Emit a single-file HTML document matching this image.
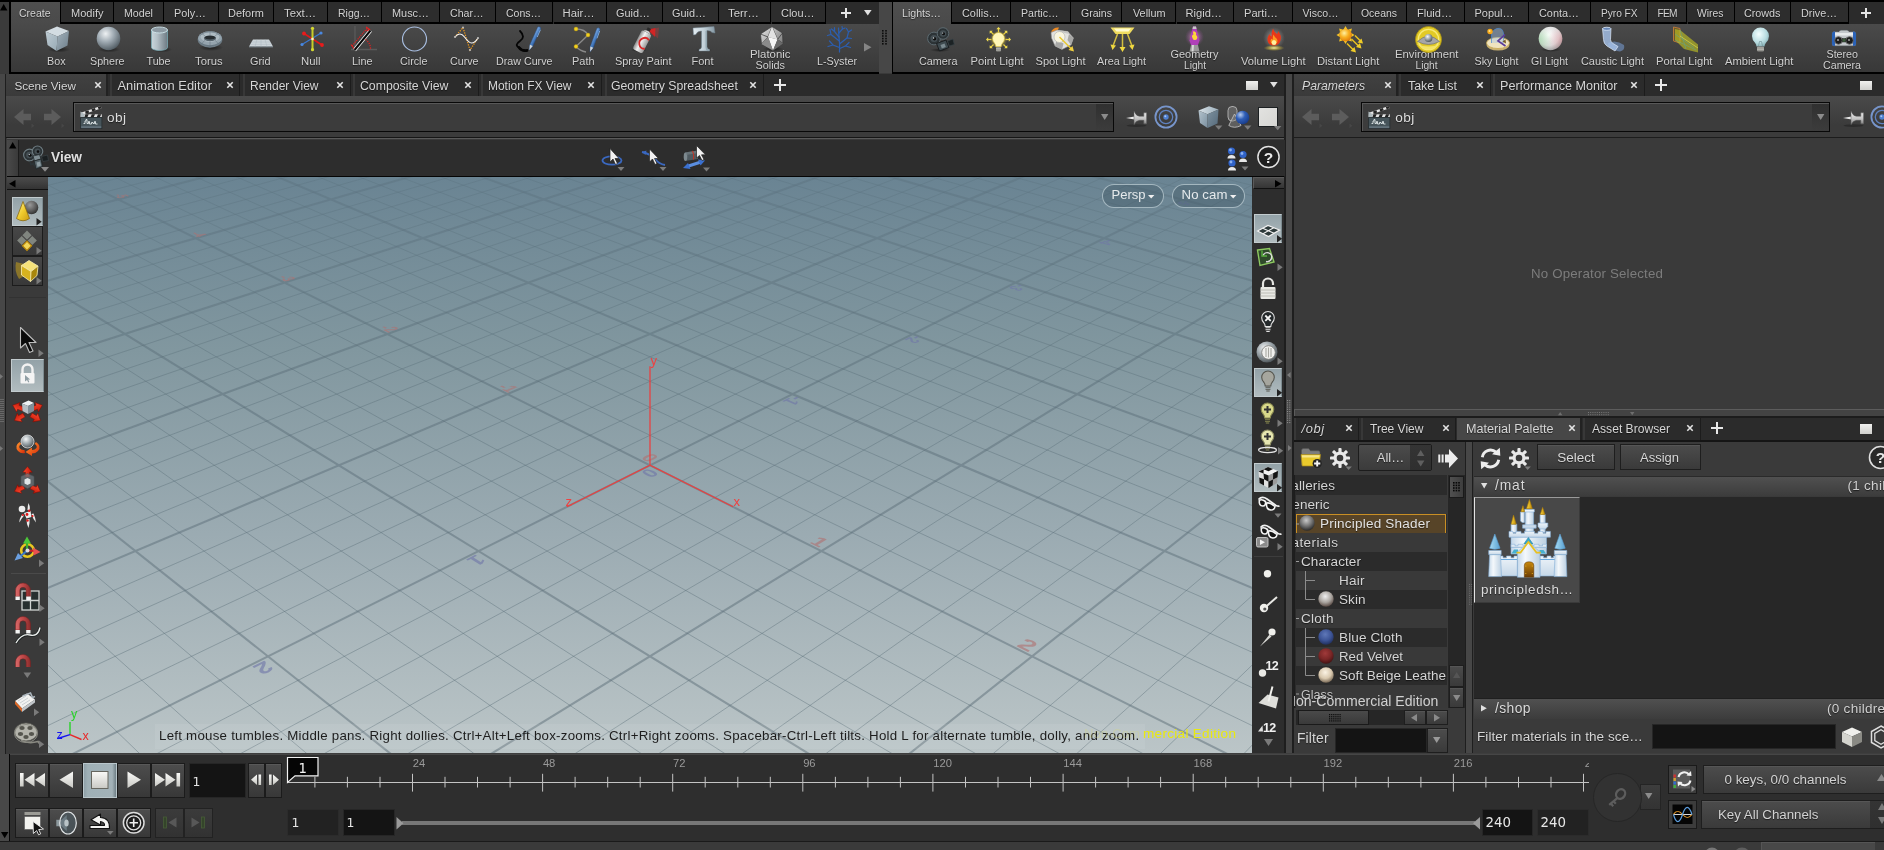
<!DOCTYPE html>
<html lang="en"><head><meta charset="utf-8"><title>Houdini - untitled.hip</title>
<style>
html,body{margin:0;padding:0;background:#3a3a3a;}
body{width:1884px;height:850px;overflow:hidden;font-family:"Liberation Sans",sans-serif;font-size:10.5px;color:#cbcbcb;}
#app{will-change:transform;position:relative;width:1884px;height:850px;overflow:hidden;background:#3a3a3a;}
#app div,#app svg{position:absolute;box-sizing:border-box;}
#app svg{overflow:visible;}
.t{white-space:nowrap;text-shadow:0 1px 1px rgba(0,0,0,.55);}
.ns{text-shadow:none;}
.tab{background:#2d2d2d;border-right:1px solid #000;border-bottom:2px solid #000;}
.btn{background:linear-gradient(#4c4c4c,#3a3a3a);border:1px solid #1e1e1e;box-shadow:inset 0 1px 0 rgba(255,255,255,.06);}
.sel{background:linear-gradient(#8e9da3,#a9b5b8);border:1px solid #c4cccf;}
.field{background:#141414;border:1px solid #262626;}

</style></head>
<body>
<svg width="0" height="0" style="position:absolute"><defs></defs></svg>

<div id="app">
<div style="left:0px;top:0px;width:1884px;height:2px;background:#000;"></div>
<div style="left:0px;top:2px;width:9px;height:71px;background:#3b3b3b;"></div>
<svg style="left:0px;top:4px;" width="8" height="7" viewBox="0 0 8 7"><path d="M0 6.5 L3.7 0 L7.4 6.5Z" fill="#000"/></svg>
<div style="left:9px;top:2px;width:2px;height:72px;background:#000;"></div>
<div style="left:11px;top:2px;width:868px;height:70px;background:linear-gradient(#4a4a4a 0,#4a4a4a 22px,#383838 100%);"></div>
<div style="left:61px;top:2px;width:818px;height:22px;background:#2b2b2b;"></div>
<div style="left:11px;top:2px;width:50px;height:22px;background:linear-gradient(#4f4f4f,#4a4a4a);border-right:1px solid #000;"></div>
<div class="t" style="left:19px;top:8.00px;font-size:10.49px;line-height:11px;letter-spacing:0.000px;color:#d2d2d2;">Create</div>
<div class="tab" style="left:61px;top:2px;width:53px;height:22px;"></div>
<div class="t" style="left:71px;top:7.00px;font-size:11.03px;line-height:12px;letter-spacing:0.000px;color:#d2d2d2;">Modify</div>
<div class="tab" style="left:114px;top:2px;width:50.4px;height:22px;"></div>
<div class="t" style="left:124px;top:7.00px;font-size:10.65px;line-height:12px;letter-spacing:0.000px;color:#d2d2d2;">Model</div>
<div class="tab" style="left:164.4px;top:2px;width:54.2px;height:22px;"></div>
<div class="t" style="left:174px;top:7.00px;font-size:10.86px;line-height:12px;letter-spacing:0.000px;color:#d2d2d2;">Poly…</div>
<div class="tab" style="left:218.6px;top:2px;width:55.2px;height:22px;"></div>
<div class="t" style="left:228px;top:7.00px;font-size:10.98px;line-height:12px;letter-spacing:0.000px;color:#d2d2d2;">Deform</div>
<div class="tab" style="left:273.8px;top:2px;width:53.8px;height:22px;"></div>
<div class="t" style="left:284px;top:7.00px;font-size:11.29px;line-height:12px;letter-spacing:0.000px;color:#d2d2d2;">Text…</div>
<div class="tab" style="left:327.6px;top:2px;width:54.7px;height:22px;"></div>
<div class="t" style="left:338px;top:8.00px;font-size:10.47px;line-height:11px;letter-spacing:0.000px;color:#d2d2d2;">Rigg…</div>
<div class="tab" style="left:382.3px;top:2px;width:58px;height:22px;"></div>
<div class="t" style="left:392px;top:7.00px;font-size:10.92px;line-height:12px;letter-spacing:0.000px;color:#d2d2d2;">Musc…</div>
<div class="tab" style="left:440.3px;top:2px;width:56px;height:22px;"></div>
<div class="t" style="left:450px;top:7.00px;font-size:10.58px;line-height:12px;letter-spacing:0.000px;color:#d2d2d2;">Char…</div>
<div class="tab" style="left:496.3px;top:2px;width:57.2px;height:22px;"></div>
<div class="t" style="left:506px;top:8.00px;font-size:10.50px;line-height:11px;letter-spacing:0.000px;color:#d2d2d2;">Cons…</div>
<div class="tab" style="left:553.5px;top:2px;width:53px;height:22px;"></div>
<div class="t" style="left:562.5px;top:7.00px;font-size:11.29px;line-height:12px;letter-spacing:0.000px;color:#d2d2d2;">Hair…</div>
<div class="tab" style="left:606.5px;top:2px;width:56px;height:22px;"></div>
<div class="t" style="left:616px;top:7.00px;font-size:10.92px;line-height:12px;letter-spacing:0.000px;color:#d2d2d2;">Guid…</div>
<div class="tab" style="left:662.5px;top:2px;width:56.1px;height:22px;"></div>
<div class="t" style="left:672px;top:7.00px;font-size:10.92px;line-height:12px;letter-spacing:0.000px;color:#d2d2d2;">Guid…</div>
<div class="tab" style="left:718.6px;top:2px;width:52.9px;height:22px;"></div>
<div class="t" style="left:728px;top:7.00px;font-size:11.39px;line-height:12px;letter-spacing:0.000px;color:#d2d2d2;">Terr…</div>
<div class="tab" style="left:771.5px;top:2px;width:54.9px;height:22px;"></div>
<div class="t" style="left:781px;top:7.00px;font-size:10.96px;line-height:12px;letter-spacing:0.000px;color:#d2d2d2;">Clou…</div>
<svg style="left:841px;top:8px;" width="10" height="10" viewBox="0 0 10 10"><path d="M5 0V10M0 5H10" stroke="#e6e6e6" stroke-width="2" fill="none"/></svg>
<svg style="left:864px;top:10px;" width="8" height="6" viewBox="0 0 8 6"><path d="M0 0H7.6L3.8 5.6Z" fill="#e0e0e0"/></svg>
<div style="left:11px;top:72px;width:868px;height:2px;background:#000;"></div>
<div class="t" style="left:47px;top:55.00px;font-size:10.74px;line-height:12px;letter-spacing:0.000px;color:#d0d0d0;">Box</div>
<div class="t" style="left:90px;top:55.00px;font-size:10.70px;line-height:12px;letter-spacing:0.000px;color:#d0d0d0;">Sphere</div>
<div class="t" style="left:146.5px;top:55.00px;font-size:10.70px;line-height:12px;letter-spacing:0.000px;color:#d0d0d0;">Tube</div>
<div class="t" style="left:195px;top:55.00px;font-size:11.25px;line-height:12px;letter-spacing:0.000px;color:#d0d0d0;">Torus</div>
<div class="t" style="left:250px;top:55.00px;font-size:10.85px;line-height:12px;letter-spacing:0.000px;color:#d0d0d0;">Grid</div>
<div class="t" style="left:301px;top:55.00px;font-size:11.32px;line-height:12px;letter-spacing:0.000px;color:#d0d0d0;">Null</div>
<div class="t" style="left:352px;top:55.00px;font-size:10.84px;line-height:12px;letter-spacing:0.000px;color:#d0d0d0;">Line</div>
<div class="t" style="left:400px;top:55.00px;font-size:10.76px;line-height:12px;letter-spacing:0.000px;color:#d0d0d0;">Circle</div>
<div class="t" style="left:450px;top:55.00px;font-size:10.68px;line-height:12px;letter-spacing:0.000px;color:#d0d0d0;">Curve</div>
<div class="t" style="left:496px;top:55.00px;font-size:10.70px;line-height:12px;letter-spacing:0.000px;color:#d0d0d0;">Draw Curve</div>
<div class="t" style="left:572px;top:55.00px;font-size:10.94px;line-height:12px;letter-spacing:0.000px;color:#d0d0d0;">Path</div>
<div class="t" style="left:615px;top:55.00px;font-size:10.93px;line-height:12px;letter-spacing:-0.000px;color:#d0d0d0;">Spray Paint</div>
<div class="t" style="left:691.5px;top:55.00px;font-size:10.99px;line-height:12px;letter-spacing:0.000px;color:#d0d0d0;">Font</div>
<div class="t" style="left:750px;top:47.70px;font-size:11.38px;line-height:12px;letter-spacing:0.000px;color:#d0d0d0;">Platonic</div>
<div class="t" style="left:755.5px;top:58.70px;font-size:10.83px;line-height:12px;letter-spacing:0.000px;color:#d0d0d0;">Solids</div>
<div class="t" style="left:817px;top:55.00px;font-size:10.74px;line-height:12px;letter-spacing:0.000px;color:#d0d0d0;">L-Syster</div>
<svg style="left:863.5px;top:42.5px;" width="8" height="9" viewBox="0 0 8 9"><path d="M0 0L7.5 4.3L0 8.6Z" fill="#858585"/></svg>
<div style="left:879px;top:2px;width:12.5px;height:71px;background:#474747;"></div>
<div style="left:891.5px;top:2px;width:1.5px;height:72px;background:#000;"></div>
<svg style="left:882.3px;top:30px;" width="6" height="15" viewBox="0 0 6 15"><rect x="0" y="0" width="1.6" height="1.6" fill="#0c0c0c"/><rect x="0" y="2.6" width="1.6" height="1.6" fill="#0c0c0c"/><rect x="0" y="5.2" width="1.6" height="1.6" fill="#0c0c0c"/><rect x="0" y="7.8" width="1.6" height="1.6" fill="#0c0c0c"/><rect x="0" y="10.4" width="1.6" height="1.6" fill="#0c0c0c"/><rect x="0" y="13" width="1.6" height="1.6" fill="#0c0c0c"/><rect x="3.2" y="0" width="1.6" height="1.6" fill="#0c0c0c"/><rect x="3.2" y="2.6" width="1.6" height="1.6" fill="#0c0c0c"/><rect x="3.2" y="5.2" width="1.6" height="1.6" fill="#0c0c0c"/><rect x="3.2" y="7.8" width="1.6" height="1.6" fill="#0c0c0c"/><rect x="3.2" y="10.4" width="1.6" height="1.6" fill="#0c0c0c"/><rect x="3.2" y="13" width="1.6" height="1.6" fill="#0c0c0c"/></svg>
<div style="left:893px;top:2px;width:991px;height:70px;background:linear-gradient(#4a4a4a 0,#4a4a4a 22px,#383838 100%);"></div>
<div style="left:952.2px;top:2px;width:931.8px;height:22px;background:#2b2b2b;"></div>
<div style="left:893px;top:2px;width:59.2px;height:22px;background:linear-gradient(#4f4f4f,#4a4a4a);border-right:1px solid #000;"></div>
<div class="t" style="left:902px;top:7.00px;font-size:10.63px;line-height:12px;letter-spacing:0.000px;color:#d2d2d2;">Lights…</div>
<div class="tab" style="left:952.2px;top:2px;width:59.1px;height:22px;"></div>
<div class="t" style="left:962px;top:7.00px;font-size:10.89px;line-height:12px;letter-spacing:0.000px;color:#d2d2d2;">Collis…</div>
<div class="tab" style="left:1011.3px;top:2px;width:60.1px;height:22px;"></div>
<div class="t" style="left:1021px;top:7.00px;font-size:10.55px;line-height:12px;letter-spacing:0.000px;color:#d2d2d2;">Partic…</div>
<div class="tab" style="left:1071.4px;top:2px;width:51px;height:22px;"></div>
<div class="t" style="left:1081px;top:7.00px;font-size:10.53px;line-height:12px;letter-spacing:0.000px;color:#d2d2d2;">Grains</div>
<div class="tab" style="left:1122.4px;top:2px;width:54.1px;height:22px;"></div>
<div class="t" style="left:1133px;top:7.00px;font-size:10.83px;line-height:12px;letter-spacing:0.000px;color:#d2d2d2;">Vellum</div>
<div class="tab" style="left:1176.5px;top:2px;width:57.9px;height:22px;"></div>
<div class="t" style="left:1185.5px;top:7.00px;font-size:11.13px;line-height:12px;letter-spacing:0.000px;color:#d2d2d2;">Rigid…</div>
<div class="tab" style="left:1234.4px;top:2px;width:58.9px;height:22px;"></div>
<div class="t" style="left:1244px;top:7.00px;font-size:11.13px;line-height:12px;letter-spacing:0.000px;color:#d2d2d2;">Parti…</div>
<div class="tab" style="left:1293.3px;top:2px;width:58.3px;height:22px;"></div>
<div class="t" style="left:1302.5px;top:7.00px;font-size:10.50px;line-height:12px;letter-spacing:0.000px;color:#d2d2d2;">Visco…</div>
<div class="tab" style="left:1351.6px;top:2px;width:55.5px;height:22px;"></div>
<div class="t" style="left:1361px;top:8.00px;font-size:10.45px;line-height:11px;letter-spacing:0.000px;color:#d2d2d2;">Oceans</div>
<div class="tab" style="left:1407.1px;top:2px;width:57.5px;height:22px;"></div>
<div class="t" style="left:1417px;top:7.00px;font-size:11.05px;line-height:12px;letter-spacing:0.000px;color:#d2d2d2;">Fluid…</div>
<div class="tab" style="left:1464.6px;top:2px;width:64.6px;height:22px;"></div>
<div class="t" style="left:1474.5px;top:7.00px;font-size:10.96px;line-height:12px;letter-spacing:0.000px;color:#d2d2d2;">Popul…</div>
<div class="tab" style="left:1529.2px;top:2px;width:62px;height:22px;"></div>
<div class="t" style="left:1539px;top:7.00px;font-size:10.90px;line-height:12px;letter-spacing:0.000px;color:#d2d2d2;">Conta…</div>
<div class="tab" style="left:1591.2px;top:2px;width:56.4px;height:22px;"></div>
<div class="t" style="left:1601px;top:8.00px;font-size:10.18px;line-height:11px;letter-spacing:-0.042px;color:#d2d2d2;">Pyro FX</div>
<div class="tab" style="left:1647.6px;top:2px;width:39.9px;height:22px;"></div>
<div class="t" style="left:1657.5px;top:8.00px;font-size:10.18px;line-height:11px;letter-spacing:-0.740px;color:#d2d2d2;">FEM</div>
<div class="tab" style="left:1687.5px;top:2px;width:47px;height:22px;"></div>
<div class="t" style="left:1697px;top:8.00px;font-size:10.37px;line-height:11px;letter-spacing:0.000px;color:#d2d2d2;">Wires</div>
<div class="tab" style="left:1734.5px;top:2px;width:56.8px;height:22px;"></div>
<div class="t" style="left:1744px;top:7.00px;font-size:10.77px;line-height:12px;letter-spacing:0.000px;color:#d2d2d2;">Crowds</div>
<div class="tab" style="left:1791.3px;top:2px;width:58.1px;height:22px;"></div>
<div class="t" style="left:1801px;top:7.00px;font-size:10.80px;line-height:12px;letter-spacing:0.000px;color:#d2d2d2;">Drive…</div>
<svg style="left:1861px;top:8px;" width="10" height="10" viewBox="0 0 10 10"><path d="M5 0V10M0 5H10" stroke="#e6e6e6" stroke-width="2" fill="none"/></svg>
<div style="left:893px;top:72px;width:991px;height:2px;background:#000;"></div>
<div class="t" style="left:919px;top:55.00px;font-size:10.82px;line-height:12px;letter-spacing:0.000px;color:#d0d0d0;">Camera</div>
<div class="t" style="left:970.5px;top:55.00px;font-size:11.22px;line-height:12px;letter-spacing:0.000px;color:#d0d0d0;">Point Light</div>
<div class="t" style="left:1035.5px;top:55.00px;font-size:11.10px;line-height:12px;letter-spacing:0.000px;color:#d0d0d0;">Spot Light</div>
<div class="t" style="left:1097px;top:55.00px;font-size:10.75px;line-height:12px;letter-spacing:0.000px;color:#d0d0d0;">Area Light</div>
<div class="t" style="left:1170.5px;top:47.70px;font-size:10.93px;line-height:12px;letter-spacing:0.000px;color:#d0d0d0;">Geometry</div>
<div class="t" style="left:1184px;top:59.70px;font-size:10.18px;line-height:11px;letter-spacing:-0.017px;color:#d0d0d0;">Light</div>
<div class="t" style="left:1241px;top:55.00px;font-size:11.16px;line-height:12px;letter-spacing:0.000px;color:#d0d0d0;">Volume Light</div>
<div class="t" style="left:1317px;top:55.00px;font-size:11.24px;line-height:12px;letter-spacing:0.000px;color:#d0d0d0;">Distant Light</div>
<div class="t" style="left:1395px;top:47.70px;font-size:11.31px;line-height:12px;letter-spacing:0.000px;color:#d0d0d0;">Environment</div>
<div class="t" style="left:1415.5px;top:59.70px;font-size:10.18px;line-height:11px;letter-spacing:-0.017px;color:#d0d0d0;">Light</div>
<div class="t" style="left:1474.5px;top:55.00px;font-size:10.70px;line-height:12px;letter-spacing:0.000px;color:#d0d0d0;">Sky Light</div>
<div class="t" style="left:1531px;top:55.00px;font-size:10.57px;line-height:12px;letter-spacing:0.000px;color:#d0d0d0;">GI Light</div>
<div class="t" style="left:1581px;top:55.00px;font-size:10.90px;line-height:12px;letter-spacing:0.000px;color:#d0d0d0;">Caustic Light</div>
<div class="t" style="left:1656px;top:55.00px;font-size:11.17px;line-height:12px;letter-spacing:0.000px;color:#d0d0d0;">Portal Light</div>
<div class="t" style="left:1725px;top:55.00px;font-size:11.20px;line-height:12px;letter-spacing:0.000px;color:#d0d0d0;">Ambient Light</div>
<div class="t" style="left:1826.5px;top:47.70px;font-size:10.69px;line-height:12px;letter-spacing:0.000px;color:#d0d0d0;">Stereo</div>
<div class="t" style="left:1823px;top:58.70px;font-size:10.68px;line-height:12px;letter-spacing:0.000px;color:#d0d0d0;">Camera</div>
<div style="left:6px;top:74px;width:1279px;height:22px;background:#2b2b2b;"></div>
<div style="left:6px;top:74px;width:102px;height:22px;background:linear-gradient(#414141,#3a3a3a);border-right:2px solid #222;"></div>
<div class="t" style="left:14.4px;top:78.50px;font-size:11.69px;line-height:13px;letter-spacing:0.000px;color:#d6d6d6;">Scene View</div>
<svg style="left:95px;top:81.5px;" width="6" height="6" viewBox="0 0 6 6"><path d="M0.3 0.3L5.7 5.7M5.7 0.3L0.3 5.7" stroke="#e4e4e4" stroke-width="1.6" fill="none"/></svg>
<div style="left:110.4px;top:74px;width:129.9px;height:22px;background:#2b2b2b;border-left:2px solid #383838;border-right:1px solid #1c1c1c;"></div>
<div class="t" style="left:117.5px;top:77.50px;font-size:12.87px;line-height:15px;letter-spacing:0.005px;color:#d6d6d6;">Animation Editor</div>
<svg style="left:227px;top:81.5px;" width="6" height="6" viewBox="0 0 6 6"><path d="M0.3 0.3L5.7 5.7M5.7 0.3L0.3 5.7" stroke="#e4e4e4" stroke-width="1.6" fill="none"/></svg>
<div style="left:242.9px;top:74px;width:108.1px;height:22px;background:#2b2b2b;border-left:2px solid #383838;border-right:1px solid #1c1c1c;"></div>
<div class="t" style="left:250px;top:78.50px;font-size:12.00px;line-height:14px;letter-spacing:0.000px;color:#d6d6d6;">Render View</div>
<svg style="left:337px;top:81.5px;" width="6" height="6" viewBox="0 0 6 6"><path d="M0.3 0.3L5.7 5.7M5.7 0.3L0.3 5.7" stroke="#e4e4e4" stroke-width="1.6" fill="none"/></svg>
<div style="left:353px;top:74px;width:125.8px;height:22px;background:#2b2b2b;border-left:2px solid #383838;border-right:1px solid #1c1c1c;"></div>
<div class="t" style="left:360px;top:78.50px;font-size:12.28px;line-height:14px;letter-spacing:0.000px;color:#d6d6d6;">Composite View</div>
<svg style="left:464.8px;top:81.5px;" width="6" height="6" viewBox="0 0 6 6"><path d="M0.3 0.3L5.7 5.7M5.7 0.3L0.3 5.7" stroke="#e4e4e4" stroke-width="1.6" fill="none"/></svg>
<div style="left:481.4px;top:74px;width:120.6px;height:22px;background:#2b2b2b;border-left:2px solid #383838;border-right:1px solid #1c1c1c;"></div>
<div class="t" style="left:488px;top:78.50px;font-size:11.96px;line-height:14px;letter-spacing:0.000px;color:#d6d6d6;">Motion FX View</div>
<svg style="left:587.9px;top:81.5px;" width="6" height="6" viewBox="0 0 6 6"><path d="M0.3 0.3L5.7 5.7M5.7 0.3L0.3 5.7" stroke="#e4e4e4" stroke-width="1.6" fill="none"/></svg>
<div style="left:604.5px;top:74px;width:159.4px;height:22px;background:#2b2b2b;border-left:2px solid #383838;border-right:1px solid #1c1c1c;"></div>
<div class="t" style="left:611px;top:78.50px;font-size:12.28px;line-height:14px;letter-spacing:0.000px;color:#d6d6d6;">Geometry Spreadsheet</div>
<svg style="left:749.9px;top:81.5px;" width="6" height="6" viewBox="0 0 6 6"><path d="M0.3 0.3L5.7 5.7M5.7 0.3L0.3 5.7" stroke="#e4e4e4" stroke-width="1.6" fill="none"/></svg>
<svg style="left:774px;top:78.5px;" width="12" height="12" viewBox="0 0 12 12"><path d="M6 0V12M0 6H12" stroke="#e8e8e8" stroke-width="2" fill="none"/></svg>
<div style="left:1246px;top:80.5px;width:12px;height:9.5px;background:linear-gradient(#f0f0ee,#cfcfcc);"></div>
<svg style="left:1269.8px;top:82px;" width="8" height="6" viewBox="0 0 8 6"><path d="M0 0H7.6L3.8 5.6Z" fill="#e0e0e0"/></svg>
<div style="left:1294px;top:74px;width:590px;height:22px;background:#2b2b2b;"></div>
<div style="left:1294px;top:74px;width:103.8px;height:22px;background:linear-gradient(#414141,#3a3a3a);border-right:2px solid #222;"></div>
<div class="t" style="left:1302px;top:78.50px;font-size:12.19px;line-height:14px;letter-spacing:-0.000px;font-style:italic;color:#d6d6d6;">Parameters</div>
<svg style="left:1384.6px;top:81.5px;" width="6" height="6" viewBox="0 0 6 6"><path d="M0.3 0.3L5.7 5.7M5.7 0.3L0.3 5.7" stroke="#e4e4e4" stroke-width="1.6" fill="none"/></svg>
<div style="left:1399px;top:74px;width:92px;height:22px;background:#2b2b2b;border-left:2px solid #383838;border-right:1px solid #1c1c1c;"></div>
<div class="t" style="left:1408px;top:78.50px;font-size:12.42px;line-height:14px;letter-spacing:0.000px;color:#d6d6d6;">Take List</div>
<svg style="left:1477px;top:81.5px;" width="6" height="6" viewBox="0 0 6 6"><path d="M0.3 0.3L5.7 5.7M5.7 0.3L0.3 5.7" stroke="#e4e4e4" stroke-width="1.6" fill="none"/></svg>
<div style="left:1493px;top:74px;width:151.7px;height:22px;background:#2b2b2b;border-left:2px solid #383838;border-right:1px solid #1c1c1c;"></div>
<div class="t" style="left:1500px;top:78.50px;font-size:12.58px;line-height:14px;letter-spacing:0.000px;color:#d6d6d6;">Performance Monitor</div>
<svg style="left:1630.6px;top:81.5px;" width="6" height="6" viewBox="0 0 6 6"><path d="M0.3 0.3L5.7 5.7M5.7 0.3L0.3 5.7" stroke="#e4e4e4" stroke-width="1.6" fill="none"/></svg>
<svg style="left:1654.8px;top:78.5px;" width="12" height="12" viewBox="0 0 12 12"><path d="M6 0V12M0 6H12" stroke="#e8e8e8" stroke-width="2" fill="none"/></svg>
<div style="left:1860px;top:80.5px;width:12px;height:9.5px;background:linear-gradient(#f0f0ee,#cfcfcc);"></div>
<div style="left:6px;top:96px;width:1279px;height:41px;background:linear-gradient(#4a4a4a,#3b3b3b 70%);"></div>
<div style="left:6px;top:136.5px;width:1279px;height:1.5px;background:#1c1c1c;"></div>
<svg style="left:13.5px;top:108.6px;" width="48" height="22" viewBox="0 0 48 22"><g fill="#5c5c5c"><path d="M0 8L9.5 0V4.8H17V11.2H9.5V16Z"/><path d="M47 8L37.5 0V4.8H30V11.2H37.5V16Z"/></g>
<path d="M17.5 14.5l3 2.2-3 2.2zM47.5 14.5l3 2.2-3 2.2z" fill="#474747"/></svg>
<div style="left:73px;top:102px;width:1041.4px;height:29.7px;background:#3c3c3c;border:1.3px solid #080808;box-shadow:inset 1px 1px 0 #585858;"></div>
<div style="left:1095.9px;top:103.5px;width:17.5px;height:27px;background:linear-gradient(#303030,#3c3c3c);"></div>
<svg style="left:1100.9px;top:113.5px;" width="8" height="7" viewBox="0 0 8 7"><path d="M0 0H7.4L3.7 6Z" fill="#8c8c8c"/></svg>
<svg style="left:80px;top:105px;" width="22" height="24" viewBox="0 0 22 24"><g>
<path d="M0.800 7.800L20.800 1L21.500 3.300L1.500 10.100Z" fill="#e6e6e6"/><path d="M5 6.400l3.400-1.200 .8 2.300-3.400 1.200zM11.500 4.200l3.400-1.200 .8 2.300-3.400 1.200zM17.800 2l3-.9 .7 2.200-2.900 1z" fill="#242424"/>
<rect x="0.800" y="9.300" width="21" height="2.900" fill="#e6e6e6"/><path d="M5.500 9.300h3.200l-1.300 2.900h-3.200zM11.800 9.300h3.200l-1.300 2.900h-3.200zM18 9.300h3.200l-1.300 2.900h-3.200z" fill="#242424"/>
<path d="M0.500 6.500L4.500 9.300V12.200H0.500Z" fill="#aeb9bd"/>
<rect x="0.600" y="12.600" width="21.300" height="11" fill="#46545a" stroke="#262e31" stroke-width=".8"/>
<rect x="1.200" y="21.200" width="20" height="1.900" fill="#62717a"/>
<path d="M3.500 18.500h1.500v-2.500h1v-1.500h1v4h1.500v-2h1v2.500h2v-1.500h1.500v1h1.500v-2h1v2.500h2" stroke="#dfe6e8" stroke-width=".9" fill="none"/>
</g></svg>
<div class="t" style="left:107px;top:110.00px;font-size:13.64px;line-height:15px;letter-spacing:0.399px;color:#dedede;">obj</div>
<svg style="left:1126px;top:108.5px;" width="22" height="18" viewBox="0 0 22 18"><defs><linearGradient id="ping" x1="0" y1="0" x2="0" y2="1"><stop offset="0" stop-color="#f2f2f2"/><stop offset=".55" stop-color="#c4c4c4"/><stop offset="1" stop-color="#7a7a7a"/></linearGradient></defs>
<ellipse cx="10.500" cy="16.600" rx="10" ry="1.300" fill="#2c2c2c"/>
<path d="M0 9L8.500 7.600V10.400Z" fill="#ececec"/>
<path d="M8 2.200Q10 7 13.500 7.300H17.800V3.800H20.600V14.800H17.800V11.300H13.500Q10 11.600 8 15.800Z" fill="url(#ping)" stroke="#5c5c5c" stroke-width=".5"/></svg>
<svg style="left:1153.9px;top:104.7px;" width="24" height="24" viewBox="0 0 24 24"><circle cx="12" cy="12" r="10.6" fill="none" stroke="#7795cb" stroke-width="1.8"/>
<circle cx="12" cy="12" r="6.7" fill="none" stroke="#5f82c0" stroke-width="1.3"/>
<circle cx="12" cy="12" r="2.7" fill="#4f7fd0"/><circle cx="11.3" cy="11.2" r="1" fill="#a8c6f2"/></svg>
<div style="left:1294px;top:96px;width:590px;height:41px;background:linear-gradient(#4a4a4a,#3b3b3b 70%);"></div>
<div style="left:1294px;top:136.5px;width:590px;height:1.5px;background:#1c1c1c;"></div>
<svg style="left:1301.8px;top:108.6px;" width="48" height="22" viewBox="0 0 48 22"><g fill="#5c5c5c"><path d="M0 8L9.5 0V4.8H17V11.2H9.5V16Z"/><path d="M47 8L37.5 0V4.8H30V11.2H37.5V16Z"/></g>
<path d="M17.5 14.5l3 2.2-3 2.2zM47.5 14.5l3 2.2-3 2.2z" fill="#474747"/></svg>
<div style="left:1361.3px;top:102px;width:469px;height:29.7px;background:#3c3c3c;border:1.3px solid #080808;box-shadow:inset 1px 1px 0 #585858;"></div>
<div style="left:1811.8px;top:103.5px;width:17.5px;height:27px;background:linear-gradient(#303030,#3c3c3c);"></div>
<svg style="left:1816.8px;top:113.5px;" width="8" height="7" viewBox="0 0 8 7"><path d="M0 0H7.4L3.7 6Z" fill="#8c8c8c"/></svg>
<svg style="left:1368.3px;top:105px;" width="22" height="24" viewBox="0 0 22 24"><g>
<path d="M0.800 7.800L20.800 1L21.500 3.300L1.500 10.100Z" fill="#e6e6e6"/><path d="M5 6.400l3.400-1.200 .8 2.300-3.400 1.200zM11.500 4.200l3.400-1.200 .8 2.300-3.400 1.200zM17.800 2l3-.9 .7 2.200-2.900 1z" fill="#242424"/>
<rect x="0.800" y="9.300" width="21" height="2.900" fill="#e6e6e6"/><path d="M5.500 9.300h3.200l-1.300 2.900h-3.200zM11.800 9.300h3.200l-1.300 2.900h-3.200zM18 9.300h3.200l-1.300 2.900h-3.200z" fill="#242424"/>
<path d="M0.500 6.500L4.500 9.300V12.200H0.500Z" fill="#aeb9bd"/>
<rect x="0.600" y="12.600" width="21.300" height="11" fill="#46545a" stroke="#262e31" stroke-width=".8"/>
<rect x="1.200" y="21.200" width="20" height="1.900" fill="#62717a"/>
<path d="M3.500 18.500h1.500v-2.500h1v-1.500h1v4h1.500v-2h1v2.500h2v-1.500h1.500v1h1.500v-2h1v2.500h2" stroke="#dfe6e8" stroke-width=".9" fill="none"/>
</g></svg>
<div class="t" style="left:1395.3px;top:110.00px;font-size:13.64px;line-height:15px;letter-spacing:0.399px;color:#dedede;">obj</div>
<svg style="left:1842.6px;top:108.5px;" width="22" height="18" viewBox="0 0 22 18"><defs><linearGradient id="ping" x1="0" y1="0" x2="0" y2="1"><stop offset="0" stop-color="#f2f2f2"/><stop offset=".55" stop-color="#c4c4c4"/><stop offset="1" stop-color="#7a7a7a"/></linearGradient></defs>
<ellipse cx="10.500" cy="16.600" rx="10" ry="1.300" fill="#2c2c2c"/>
<path d="M0 9L8.500 7.600V10.400Z" fill="#ececec"/>
<path d="M8 2.200Q10 7 13.500 7.300H17.800V3.800H20.600V14.800H17.800V11.300H13.500Q10 11.600 8 15.800Z" fill="url(#ping)" stroke="#5c5c5c" stroke-width=".5"/></svg>
<svg style="left:1870px;top:104.7px;" width="24" height="24" viewBox="0 0 24 24"><circle cx="12" cy="12" r="10.6" fill="none" stroke="#7795cb" stroke-width="1.8"/>
<circle cx="12" cy="12" r="6.7" fill="none" stroke="#5f82c0" stroke-width="1.3"/>
<circle cx="12" cy="12" r="2.7" fill="#4f7fd0"/><circle cx="11.3" cy="11.2" r="1" fill="#a8c6f2"/></svg>
<svg style="left:1198px;top:106px;" width="24" height="24" viewBox="0 0 24 24"><defs><linearGradient id="bxa" x1="0" y1="0" x2="1" y2="1"><stop offset="0" stop-color="#7f929f"/><stop offset="1" stop-color="#54697a"/></linearGradient>
<linearGradient id="bxb" x1="0" y1="0" x2="1" y2="1"><stop offset="0" stop-color="#b4c3cd"/><stop offset="1" stop-color="#7b90a0"/></linearGradient>
<linearGradient id="bxc" x1="0" y1="0" x2="1" y2="0"><stop offset="0" stop-color="#d8e1e7"/><stop offset="1" stop-color="#9db0bc"/></linearGradient></defs>
<path d="M0.500 4.500L11 0.300L20.500 3.500L9.500 8.300Z" fill="url(#bxc)"/><path d="M0.500 4.500L9.500 8.300V22L2 17Z" fill="url(#bxb)"/><path d="M9.500 8.300L20.500 3.500L19.500 17.500L9.500 22Z" fill="url(#bxa)"/>
<path d="M17 19.500h7.400l-3.700 4.200z" fill="#7b7b7b"/></svg>
<svg style="left:1227px;top:106px;" width="24" height="24" viewBox="0 0 24 24"><defs><radialGradient id="bsp" cx=".35" cy=".3" r=".75"><stop offset="0" stop-color="#b8ccee"/><stop offset=".45" stop-color="#2f5fb8"/><stop offset="1" stop-color="#173a88"/></radialGradient></defs>
<rect x="1" y="0.500" width="9" height="14.500" rx="4" fill="#8a8a8a" fill-opacity=".45" stroke="#b4b4b4" stroke-width=".9"/>
<path d="M7.500 8L1.800 19.500Q7.500 23 14 19.500Z" fill="#8a8a8a" fill-opacity=".45" stroke="#bcbcbc" stroke-width=".9"/>
<circle cx="15.500" cy="11.500" r="6.800" fill="url(#bsp)"/>
<path d="M17 19.500h7.400l-3.700 4.200z" fill="#7b7b7b"/></svg>
<div style="left:1258.2px;top:106.8px;width:20px;height:20px;background:linear-gradient(135deg,#e2e2e0,#d6d6d3);border:1.3px solid #1c2022;"></div>
<svg style="left:1274px;top:125.5px;" width="8" height="5" viewBox="0 0 8 5"><path d="M0 0h7.400l-3.700 4.200z" fill="#7b7b7b"/></svg>
<div style="left:1284px;top:74px;width:2px;height:679px;background:#1e1e1e;"></div>
<div style="left:1286px;top:74px;width:6.2px;height:679px;background:#474747;"></div>
<div style="left:1292.2px;top:74px;width:1.8px;height:679px;background:#1e1e1e;"></div>
<svg style="left:1287.3px;top:399.5px;" width="5" height="25" viewBox="0 0 5 25"><rect x="0.0" y="0.0" width="1.1" height="1.1" fill="#8a8a8a"/><rect x="0.0" y="2.2" width="1.1" height="1.1" fill="#8a8a8a"/><rect x="0.0" y="4.4" width="1.1" height="1.1" fill="#8a8a8a"/><rect x="0.0" y="6.6" width="1.1" height="1.1" fill="#8a8a8a"/><rect x="0.0" y="8.8" width="1.1" height="1.1" fill="#8a8a8a"/><rect x="0.0" y="11.0" width="1.1" height="1.1" fill="#8a8a8a"/><rect x="0.0" y="13.2" width="1.1" height="1.1" fill="#8a8a8a"/><rect x="0.0" y="15.4" width="1.1" height="1.1" fill="#8a8a8a"/><rect x="0.0" y="17.6" width="1.1" height="1.1" fill="#8a8a8a"/><rect x="0.0" y="19.8" width="1.1" height="1.1" fill="#8a8a8a"/><rect x="0.0" y="22.0" width="1.1" height="1.1" fill="#8a8a8a"/><rect x="2.2" y="0.0" width="1.1" height="1.1" fill="#8a8a8a"/><rect x="2.2" y="2.2" width="1.1" height="1.1" fill="#8a8a8a"/><rect x="2.2" y="4.4" width="1.1" height="1.1" fill="#8a8a8a"/><rect x="2.2" y="6.6" width="1.1" height="1.1" fill="#8a8a8a"/><rect x="2.2" y="8.8" width="1.1" height="1.1" fill="#8a8a8a"/><rect x="2.2" y="11.0" width="1.1" height="1.1" fill="#8a8a8a"/><rect x="2.2" y="13.2" width="1.1" height="1.1" fill="#8a8a8a"/><rect x="2.2" y="15.4" width="1.1" height="1.1" fill="#8a8a8a"/><rect x="2.2" y="17.6" width="1.1" height="1.1" fill="#8a8a8a"/><rect x="2.2" y="19.8" width="1.1" height="1.1" fill="#8a8a8a"/><rect x="2.2" y="22.0" width="1.1" height="1.1" fill="#8a8a8a"/></svg>
<svg style="left:1287px;top:372px;" width="5" height="8" viewBox="0 0 5 8"><path d="M3.600 0V6L0 3Z" fill="#7a7a7a"/></svg>
<svg style="left:1288px;top:445px;" width="5" height="8" viewBox="0 0 5 8"><path d="M0 0V6L3.600 3Z" fill="#7a7a7a"/></svg>
<div style="left:0px;top:74px;width:4.7px;height:680px;background:#474747;"></div>
<div style="left:4.7px;top:74px;width:1.3px;height:680px;background:#1e1e1e;"></div>
<svg style="left:0px;top:374px;" width="6" height="80" viewBox="0 0 6 80"><path d="M0 0l3 2.500-3 2.500zM0 72l3 2.500-3 2.500z" fill="#777"/><rect x="0.5" y="25" width="1" height="1" fill="#8a8a8a"/><rect x="0.5" y="27" width="1" height="1" fill="#8a8a8a"/><rect x="0.5" y="29" width="1" height="1" fill="#8a8a8a"/><rect x="0.5" y="31" width="1" height="1" fill="#8a8a8a"/><rect x="0.5" y="33" width="1" height="1" fill="#8a8a8a"/><rect x="0.5" y="35" width="1" height="1" fill="#8a8a8a"/><rect x="0.5" y="37" width="1" height="1" fill="#8a8a8a"/><rect x="0.5" y="39" width="1" height="1" fill="#8a8a8a"/><rect x="0.5" y="41" width="1" height="1" fill="#8a8a8a"/><rect x="0.5" y="43" width="1" height="1" fill="#8a8a8a"/><rect x="0.5" y="45" width="1" height="1" fill="#8a8a8a"/><rect x="0.5" y="47" width="1" height="1" fill="#8a8a8a"/><rect x="2.5" y="25" width="1" height="1" fill="#8a8a8a"/><rect x="2.5" y="27" width="1" height="1" fill="#8a8a8a"/><rect x="2.5" y="29" width="1" height="1" fill="#8a8a8a"/><rect x="2.5" y="31" width="1" height="1" fill="#8a8a8a"/><rect x="2.5" y="33" width="1" height="1" fill="#8a8a8a"/><rect x="2.5" y="35" width="1" height="1" fill="#8a8a8a"/><rect x="2.5" y="37" width="1" height="1" fill="#8a8a8a"/><rect x="2.5" y="39" width="1" height="1" fill="#8a8a8a"/><rect x="2.5" y="41" width="1" height="1" fill="#8a8a8a"/><rect x="2.5" y="43" width="1" height="1" fill="#8a8a8a"/><rect x="2.5" y="45" width="1" height="1" fill="#8a8a8a"/><rect x="2.5" y="47" width="1" height="1" fill="#8a8a8a"/></svg>
<div style="left:6px;top:136.6px;width:1278px;height:1.2px;background:#161616;"></div>
<div style="left:7px;top:137.8px;width:1277px;height:1.2px;background:#5a5a5a;"></div>
<div style="left:7px;top:139.5px;width:12px;height:36.5px;background:linear-gradient(90deg,#4a4a4a,#3a3a3a);border-right:1px solid #1c1c1c;"></div>
<svg style="left:9px;top:141.5px;" width="8" height="7" viewBox="0 0 8 7"><path d="M0 6.5L3.7 0L7.4 6.5Z" fill="#000"/></svg>
<div style="left:19px;top:139.5px;width:1266px;height:36.5px;background:#2d2d2d;"></div>
<div style="left:7px;top:175.6px;width:1277px;height:1.4px;background:#050505;"></div>
<div class="t" style="left:51px;top:150.00px;font-size:13.71px;line-height:15px;letter-spacing:0.000px;font-weight:bold;color:#e0e0e0;">View</div>
<div style="left:48px;top:177px;width:1204px;height:576px;background:linear-gradient(#6a8493 0%,#81979f 30%,#9babb2 62%,#bbc5c7 100%);overflow:hidden;"></div>
<svg style="left:48px;top:177px;overflow:hidden;" width="1204" height="576" viewBox="0 0 1204 576"><defs><linearGradient id="vfade" x1="0" y1="0" x2="0" y2="1"><stop offset="0" stop-color="#fff" stop-opacity=".5"/><stop offset=".35" stop-color="#fff" stop-opacity=".85"/><stop offset="1" stop-color="#fff" stop-opacity="1"/></linearGradient>
<mask id="vmask"><rect width="1204" height="576" fill="url(#vfade)"/></mask><clipPath id="vclip"><rect width="1204" height="576"/></clipPath></defs>
<g clip-path="url(#vclip)"><g mask="url(#vmask)">
<path d="M1.4 -2.0L-2.0 -1.2M1202.6 -2.0L1206.0 -1.2M42.1 -2.0L-2.0 8.8M1161.9 -2.0L1206.0 8.8M82.9 -2.0L-2.0 19.2M1121.1 -2.0L1206.0 19.2M123.6 -2.0L-2.0 30.0M1080.4 -2.0L1206.0 30.0M205.0 -2.0L-2.0 52.8M999.0 -2.0L1206.0 52.8M245.8 -2.0L-2.0 64.9M958.2 -2.0L1206.0 64.9M286.5 -2.0L-2.0 77.5M917.5 -2.0L1206.0 77.5M327.2 -2.0L-2.0 90.6M876.8 -2.0L1206.0 90.6M408.7 -2.0L-2.0 118.5M795.3 -2.0L1206.0 118.5M449.4 -2.0L-2.0 133.4M754.6 -2.0L1206.0 133.4M490.2 -2.0L-2.0 149.0M713.8 -2.0L1206.0 149.0M530.9 -2.0L-2.0 165.3M673.1 -2.0L1206.0 165.3M612.4 -2.0L-2.0 200.3M591.6 -2.0L1206.0 200.3M653.1 -2.0L-2.0 219.1M550.9 -2.0L1206.0 219.1M693.8 -2.0L-2.0 238.8M510.2 -2.0L1206.0 238.8M734.6 -2.0L-2.0 259.6M469.4 -2.0L1206.0 259.6M816.0 -2.0L-2.0 304.7M388.0 -2.0L1206.0 304.7M856.7 -2.0L-2.0 329.2M347.3 -2.0L1206.0 329.2M897.5 -2.0L-2.0 355.1M306.5 -2.0L1206.0 355.1M938.2 -2.0L-2.0 382.6M265.8 -2.0L1206.0 382.6M1019.7 -2.0L-2.0 442.9M184.3 -2.0L1206.0 442.9M1060.4 -2.0L-2.0 476.1M143.6 -2.0L1206.0 476.1M1101.1 -2.0L-2.0 511.5M102.9 -2.0L1206.0 511.5M1141.9 -2.0L-2.0 549.5M62.1 -2.0L1206.0 549.5M1206.0 7.0L106.3 578.0M-2.0 7.0L1097.7 578.0M1206.0 29.4L190.0 578.0M-2.0 29.4L1014.0 578.0M1206.0 53.6L273.8 578.0M-2.0 53.6L930.2 578.0M1206.0 79.9L357.5 578.0M-2.0 79.9L846.5 578.0M1206.0 140.1L524.9 578.0M-2.0 140.1L679.1 578.0M1206.0 174.7L608.6 578.0M-2.0 174.7L595.4 578.0M1206.0 212.9L692.3 578.0M-2.0 212.9L511.7 578.0M1206.0 255.5L776.1 578.0M-2.0 255.5L427.9 578.0M1206.0 356.4L943.5 578.0M-2.0 356.4L260.5 578.0M1206.0 417.0L1027.2 578.0M-2.0 417.0L176.8 578.0M1206.0 486.3L1110.9 578.0M-2.0 486.3L93.1 578.0M1206.0 566.2L1194.6 578.0M-2.0 566.2L9.4 578.0" stroke="#4c606b" stroke-opacity=".38" stroke-width="1" fill="none"/>
<path d="M164.3 -2.0L-2.0 41.2M1039.7 -2.0L1206.0 41.2M368.0 -2.0L-2.0 104.2M836.0 -2.0L1206.0 104.2M571.6 -2.0L-2.0 182.3M632.4 -2.0L1206.0 182.3M775.3 -2.0L-2.0 281.6M428.7 -2.0L1206.0 281.6M978.9 -2.0L-2.0 411.8M225.1 -2.0L1206.0 411.8M1182.6 -2.0L22.6 578.0M21.4 -2.0L1181.4 578.0M1206.0 108.6L441.2 578.0M-2.0 108.6L762.8 578.0M1206.0 303.0L859.8 578.0M-2.0 303.0L344.2 578.0" stroke="#4c606b" stroke-opacity=".43" stroke-width="2.1" fill="none"/>
</g><g opacity=".62" font-family="Liberation Sans, sans-serif"><text transform="matrix(6.578 3.281 -13.917 3.281 0.4 -13.8)" font-size="1" font-weight="bold" fill="#b07272" text-anchor="middle">-6</text><text transform="matrix(-6.645 3.330 -14.004 -3.330 1200.7 -9.7)" font-size="1" font-weight="bold" fill="#7076a8" text-anchor="middle">-6</text><text transform="matrix(7.434 3.708 -14.355 3.708 68.4 20.1)" font-size="1" font-weight="bold" fill="#b07272" text-anchor="middle">-5</text><text transform="matrix(-7.517 3.768 -14.446 -3.768 1131.9 24.7)" font-size="1" font-weight="bold" fill="#7076a8" text-anchor="middle">-5</text><text transform="matrix(8.468 4.224 -14.787 4.224 145.6 58.6)" font-size="1" font-weight="bold" fill="#b07272" text-anchor="middle">-4</text><text transform="matrix(-8.572 4.297 -14.882 -4.297 1053.9 63.8)" font-size="1" font-weight="bold" fill="#7076a8" text-anchor="middle">-4</text><text transform="matrix(9.735 4.856 -15.200 4.856 233.9 102.7)" font-size="1" font-weight="bold" fill="#b07272" text-anchor="middle">-3</text><text transform="matrix(-9.867 4.945 -15.297 -4.945 964.5 108.7)" font-size="1" font-weight="bold" fill="#7076a8" text-anchor="middle">-3</text><text transform="matrix(11.309 5.641 -15.567 5.641 335.9 153.5)" font-size="1" font-weight="bold" fill="#b07272" text-anchor="middle">-2</text><text transform="matrix(-11.479 5.753 -15.664 -5.753 861.0 160.5)" font-size="1" font-weight="bold" fill="#7076a8" text-anchor="middle">-2</text><text transform="matrix(13.298 6.633 -15.847 6.633 455.1 213.0)" font-size="1" font-weight="bold" fill="#b07272" text-anchor="middle">-1</text><text transform="matrix(-13.520 6.776 -15.938 -6.776 739.9 221.2)" font-size="1" font-weight="bold" fill="#7076a8" text-anchor="middle">-1</text><text transform="matrix(15.862 7.912 -15.970 7.912 596.3 283.4)" font-size="1" font-weight="bold" fill="#b07272" text-anchor="middle">0</text><text transform="matrix(-16.158 8.099 -16.047 -8.099 596.2 293.2)" font-size="1" font-weight="bold" fill="#7076a8" text-anchor="middle">0</text><text transform="matrix(19.245 9.599 -15.819 9.599 766.1 368.1)" font-size="1" font-weight="bold" fill="#b07272" text-anchor="middle">1</text><text transform="matrix(-19.652 9.850 -15.867 -9.850 423.0 380.0)" font-size="1" font-weight="bold" fill="#7076a8" text-anchor="middle">1</text><text transform="matrix(23.839 11.891 -15.189 11.891 974.3 472.0)" font-size="1" font-weight="bold" fill="#b07272" text-anchor="middle">2</text><text transform="matrix(-24.414 12.237 -15.177 -12.237 210.1 486.7)" font-size="1" font-weight="bold" fill="#7076a8" text-anchor="middle">2</text></g>
<path d="M685.0 329.8L602.0 288.3L519.0 329.8M602.0 288.3L602.0 189.3" stroke="#ea3f3f" stroke-width="1.25" fill="none"/><g font-size="13" fill="#ef4040" font-family="Liberation Sans, sans-serif"><text x="685.5" y="328.8">x</text><text x="524.0" y="328.8" text-anchor="end">z</text><text x="602.5" y="188.3">y</text></g></g></svg>
<div style="left:155px;top:724px;width:990px;height:25px;background:rgba(255,255,255,.07);"></div>
<div class="t ns" style="left:159px;top:728.00px;font-size:13.31px;line-height:15px;letter-spacing:0.242px;color:#1d1d1d;">Left mouse tumbles. Middle pans. Right dollies. Ctrl+Alt+Left box-zooms. Ctrl+Right zooms. Spacebar-Ctrl-Left tilts. Hold L for alternate tumble, dolly, and zoom.</div>
<div class="t ns" style="left:1084px;top:726.00px;font-size:13.09px;line-height:15px;letter-spacing:0.000px;color:rgba(215,215,120,.35);">Non-Com</div>
<div class="t ns" style="left:1143px;top:726.00px;font-size:13.53px;line-height:15px;letter-spacing:0.305px;color:#e9ea10;">mercial Edition</div>
<div style="left:1102.2px;top:184px;width:61.7px;height:23.5px;background:rgba(60,84,98,.38);border:1px solid rgba(190,205,212,.75);border-radius:12px;"></div>
<div class="t ns" style="left:1111.5px;top:187.40px;font-size:13.02px;line-height:15px;letter-spacing:0.000px;color:#e6eaec;">Persp</div>
<svg style="left:1148px;top:194.5px;" width="7" height="4" viewBox="0 0 7 4"><path d="M0 0h6.4l-3.2 3.6z" fill="#f0f0f0"/></svg>
<div style="left:1171.8px;top:184px;width:73.4px;height:23.5px;background:rgba(60,84,98,.38);border:1px solid rgba(190,205,212,.75);border-radius:12px;"></div>
<div class="t ns" style="left:1181.5px;top:187.40px;font-size:13.20px;line-height:15px;letter-spacing:0.104px;color:#e6eaec;">No cam</div>
<svg style="left:1230px;top:194.5px;" width="7" height="4" viewBox="0 0 7 4"><path d="M0 0h6.4l-3.2 3.6z" fill="#f0f0f0"/></svg>
<svg style="left:52px;top:707.5px;" width="44" height="42" viewBox="0 0 44 42"><path d="M18 26.600V14" stroke="#28d228" stroke-width="1.400"/><path d="M18 26.600L5.700 30.500" stroke="#1414f0" stroke-width="1.400"/><path d="M18 26.600L29.500 31.500" stroke="#e82828" stroke-width="1.400"/>
<g font-family="Liberation Sans, sans-serif" font-size="12.500"><text x="19" y="10" fill="#28d228">y</text><text x="4.500" y="31" fill="#1414f0">z</text><text x="30.500" y="31.500" fill="#e82828">x</text></g></svg>
<div style="left:1294px;top:138px;width:590px;height:271px;background:#3a3a3a;"></div>
<div class="t ns" style="left:1531px;top:265.50px;font-size:13.31px;line-height:15px;letter-spacing:0.172px;color:#7c7c7c;">No Operator Selected</div>
<div style="left:1294px;top:408.6px;width:590px;height:1.2px;background:#5c5c5c;"></div>
<div style="left:1294px;top:409.8px;width:590px;height:6.7px;background:#434343;border-left:1px solid #5c5c5c;"></div>
<div style="left:1294px;top:416.4px;width:590px;height:1.3px;background:#1c1c1c;"></div>
<svg style="left:1587.5px;top:411.5px;" width="23" height="5" viewBox="0 0 23 5"><rect x="0.0" y="0.0" width="1" height="1" fill="#777"/><rect x="0.0" y="2.2" width="1" height="1" fill="#777"/><rect x="2.2" y="0.0" width="1" height="1" fill="#777"/><rect x="2.2" y="2.2" width="1" height="1" fill="#777"/><rect x="4.4" y="0.0" width="1" height="1" fill="#777"/><rect x="4.4" y="2.2" width="1" height="1" fill="#777"/><rect x="6.6" y="0.0" width="1" height="1" fill="#777"/><rect x="6.6" y="2.2" width="1" height="1" fill="#777"/><rect x="8.8" y="0.0" width="1" height="1" fill="#777"/><rect x="8.8" y="2.2" width="1" height="1" fill="#777"/><rect x="11.0" y="0.0" width="1" height="1" fill="#777"/><rect x="11.0" y="2.2" width="1" height="1" fill="#777"/><rect x="13.2" y="0.0" width="1" height="1" fill="#777"/><rect x="13.2" y="2.2" width="1" height="1" fill="#777"/><rect x="15.4" y="0.0" width="1" height="1" fill="#777"/><rect x="15.4" y="2.2" width="1" height="1" fill="#777"/><rect x="17.6" y="0.0" width="1" height="1" fill="#777"/><rect x="17.6" y="2.2" width="1" height="1" fill="#777"/><rect x="19.8" y="0.0" width="1" height="1" fill="#777"/><rect x="19.8" y="2.2" width="1" height="1" fill="#777"/></svg>
<svg style="left:1558px;top:411.5px;" width="5" height="4" viewBox="0 0 5 4"><path d="M0 3.2L2.2 0L4.4 3.2Z" fill="#6e6e6e"/></svg>
<svg style="left:1630px;top:411.8px;" width="5" height="4" viewBox="0 0 5 4"><path d="M0 0H4.4L2.2 3.2Z" fill="#6e6e6e"/></svg>
<div style="left:1294px;top:417.5px;width:590px;height:22px;background:#2b2b2b;"></div>
<div style="left:1294.4px;top:417.5px;width:65px;height:22px;background:#2b2b2b;border-left:2px solid #383838;border-right:1px solid #1c1c1c;"></div>
<div class="t" style="left:1301.5px;top:421.00px;font-size:12.87px;line-height:15px;letter-spacing:0.583px;font-style:italic;color:#d6d6d6;">/obj</div>
<svg style="left:1346px;top:425px;" width="6" height="6" viewBox="0 0 6 6"><path d="M0.3 0.3L5.7 5.7M5.7 0.3L0.3 5.7" stroke="#e4e4e4" stroke-width="1.6" fill="none"/></svg>
<div style="left:1360.5px;top:417.5px;width:95.3px;height:22px;background:#2b2b2b;border-left:2px solid #383838;border-right:1px solid #1c1c1c;"></div>
<div class="t" style="left:1370px;top:422.00px;font-size:12.03px;line-height:14px;letter-spacing:-0.000px;color:#d6d6d6;">Tree View</div>
<svg style="left:1442.5px;top:425px;" width="6" height="6" viewBox="0 0 6 6"><path d="M0.3 0.3L5.7 5.7M5.7 0.3L0.3 5.7" stroke="#e4e4e4" stroke-width="1.6" fill="none"/></svg>
<div style="left:1456.8px;top:417.5px;width:125.6px;height:22px;background:#474747;border-right:2px solid #222;"></div>
<div class="t" style="left:1466px;top:422.00px;font-size:12.59px;line-height:14px;letter-spacing:0.000px;color:#d6d6d6;">Material Palette</div>
<svg style="left:1568.5px;top:425px;" width="6" height="6" viewBox="0 0 6 6"><path d="M0.3 0.3L5.7 5.7M5.7 0.3L0.3 5.7" stroke="#e4e4e4" stroke-width="1.6" fill="none"/></svg>
<div style="left:1583.4px;top:417.5px;width:118.1px;height:22px;background:#2b2b2b;border-left:2px solid #383838;border-right:1px solid #1c1c1c;"></div>
<div class="t" style="left:1592px;top:422.00px;font-size:12.10px;line-height:14px;letter-spacing:0.000px;color:#d6d6d6;">Asset Browser</div>
<svg style="left:1687px;top:425px;" width="6" height="6" viewBox="0 0 6 6"><path d="M0.3 0.3L5.7 5.7M5.7 0.3L0.3 5.7" stroke="#e4e4e4" stroke-width="1.6" fill="none"/></svg>
<svg style="left:1711px;top:422px;" width="12" height="12" viewBox="0 0 12 12"><path d="M6 0V12M0 6H12" stroke="#e8e8e8" stroke-width="2" fill="none"/></svg>
<div style="left:1860px;top:424px;width:12px;height:9.5px;background:linear-gradient(#f0f0ee,#cfcfcc);"></div>
<div style="left:1294px;top:439.5px;width:590px;height:2px;background:#151515;"></div>
<div style="left:1294px;top:441.5px;width:590px;height:311.5px;background:#3a3a3a;"></div>
<svg style="left:1300px;top:446px;" width="24" height="24" viewBox="0 0 24 24"><path d="M1.5 4.5Q1.5 2.5 3.5 2.5H8.5L10.5 4.8H18.5Q20 4.8 20 6.5V19H1.5Z" fill="#7d7d7d" stroke="#555" stroke-width=".6"/>
<path d="M1 8.5H20.5L19 20H2.2Z" fill="#e9c92c" stroke="#a8881a" stroke-width=".7"/><path d="M1.8 9.3H19.6L19.3 11.5H2Z" fill="#f6e58a"/>
<circle cx="17.2" cy="17.5" r="4.6" fill="#222"/><path d="M17.2 14.4v6.2M14.1 17.5h6.2" stroke="#f4f4f4" stroke-width="1.9"/></svg>
<svg style="left:1329px;top:446.6px;" width="24" height="24" viewBox="0 0 24 24"><g transform="translate(11 11)" fill="#e9e9e9"><rect x="-1.600" y="-10.0" width="3.200" height="4.5" rx=".9" transform="rotate(0)"/><rect x="-1.600" y="-10.0" width="3.200" height="4.5" rx=".9" transform="rotate(45)"/><rect x="-1.600" y="-10.0" width="3.200" height="4.5" rx=".9" transform="rotate(90)"/><rect x="-1.600" y="-10.0" width="3.200" height="4.5" rx=".9" transform="rotate(135)"/><rect x="-1.600" y="-10.0" width="3.200" height="4.5" rx=".9" transform="rotate(180)"/><rect x="-1.600" y="-10.0" width="3.200" height="4.5" rx=".9" transform="rotate(225)"/><rect x="-1.600" y="-10.0" width="3.200" height="4.5" rx=".9" transform="rotate(270)"/><rect x="-1.600" y="-10.0" width="3.200" height="4.5" rx=".9" transform="rotate(315)"/><path fill-rule="evenodd" d="M0 -6.500A6.500 6.500 0 1 0 0 6.500A6.500 6.500 0 1 0 0 -6.500ZM0 -3.300A3.300 3.300 0 1 1 0 3.300A3.300 3.300 0 1 1 0 -3.300Z"/></g><path d="M16.500 19.500h6.400l-3.200 3.600z" fill="#7b7b7b"/></svg>
<div style="left:1358px;top:444px;width:73.5px;height:26.5px;background:linear-gradient(#4b4b4b,#3b3b3b);border:1px solid #1c1c1c;border-radius:2px;"></div>
<div style="left:1409.5px;top:445px;width:21px;height:24.5px;background:linear-gradient(#343434,#2f2f2f);"></div>
<div class="t" style="left:1376.75px;top:450.00px;font-size:12.98px;line-height:15px;letter-spacing:0.032px;color:#d6d6d6;">All…</div>
<svg style="left:1417px;top:449.5px;" width="8" height="17" viewBox="0 0 8 17"><path d="M0 6L3.7 0L7.4 6ZM0 10.5H7.4L3.7 16.5Z" fill="#5f5f5f"/></svg>
<svg style="left:1437.5px;top:447.5px;" width="21" height="21" viewBox="0 0 21 21"><path d="M0.3 6.5h2v8h-2zM3.6 6.5h2v8h-2zM7 6.5h4V1L20 10.5L11 20V14.5H7Z" fill="#ececec"/></svg>
<div style="left:1294px;top:474.5px;width:153px;height:233px;background:#2b2b2b;overflow:hidden;"></div>
<div style="left:1296px;top:476.2px;width:151px;height:19px;background:#2b2b2b;"></div>
<div style="left:1296px;top:495.2px;width:151px;height:19px;background:#393939;"></div>
<div style="left:1295.5px;top:513.7px;width:150.5px;height:20px;background:#574428;border:1px solid #c98f25;"></div>
<div style="left:1296px;top:533.2px;width:151px;height:19px;background:#393939;"></div>
<div style="left:1296px;top:552.2px;width:151px;height:19px;background:#2b2b2b;"></div>
<div style="left:1296px;top:571.2px;width:151px;height:19px;background:#393939;"></div>
<div style="left:1296px;top:590.2px;width:151px;height:19px;background:#2b2b2b;"></div>
<div style="left:1296px;top:609.2px;width:151px;height:19px;background:#393939;"></div>
<div style="left:1296px;top:628.2px;width:151px;height:19px;background:#2b2b2b;"></div>
<div style="left:1296px;top:647.2px;width:151px;height:19px;background:#393939;"></div>
<div style="left:1296px;top:666.2px;width:151px;height:19px;background:#2b2b2b;"></div>
<div style="left:1296px;top:685.2px;width:151px;height:22.5px;background:#393939;"></div>
<div class="t" style="left:1291.3px;top:478.30px;font-size:13.53px;line-height:15px;letter-spacing:0.120px;color:#d4d4d4;">alleries</div>
<div class="t" style="left:1292.3px;top:497.30px;font-size:13.53px;line-height:15px;letter-spacing:0.070px;color:#d4d4d4;">eneric</div>
<svg style="left:1299px;top:515px;" width="16" height="16" viewBox="0 0 16 16"><defs><radialGradient id="bl1" cx=".45" cy=".33" r=".72"><stop offset="0" stop-color="#c9c9c9"/><stop offset=".55" stop-color="#6e6e6e"/><stop offset="1" stop-color="#1e1e1e"/></radialGradient></defs><circle cx="8" cy="8" r="7.7" fill="url(#bl1)"/></svg>
<div class="t" style="left:1320px;top:516.30px;font-size:13.53px;line-height:15px;letter-spacing:0.200px;color:#e2e2e2;">Principled Shader</div>
<div class="t" style="left:1291.5px;top:535.30px;font-size:13.53px;line-height:15px;letter-spacing:0.412px;color:#d4d4d4;">aterials</div>
<div class="t" style="left:1301px;top:554.30px;font-size:13.53px;line-height:15px;letter-spacing:0.074px;color:#d4d4d4;">Character</div>
<div class="t" style="left:1339px;top:573.30px;font-size:13.53px;line-height:15px;letter-spacing:0.231px;color:#d4d4d4;">Hair</div>
<svg style="left:1318px;top:590.8px;" width="16" height="16" viewBox="0 0 16 16"><defs><radialGradient id="bl2" cx=".45" cy=".33" r=".72"><stop offset="0" stop-color="#efefef"/><stop offset=".55" stop-color="#a9a49f"/><stop offset="1" stop-color="#4a3a34"/></radialGradient></defs><circle cx="8" cy="8" r="7.7" fill="url(#bl2)"/></svg>
<div class="t" style="left:1339px;top:592.30px;font-size:13.53px;line-height:15px;letter-spacing:0.060px;color:#d4d4d4;">Skin</div>
<div class="t" style="left:1301px;top:611.30px;font-size:13.53px;line-height:15px;letter-spacing:0.229px;color:#d4d4d4;">Cloth</div>
<svg style="left:1318px;top:628.8px;" width="16" height="16" viewBox="0 0 16 16"><defs><radialGradient id="bl3" cx=".45" cy=".33" r=".72"><stop offset="0" stop-color="#5f78b8"/><stop offset=".55" stop-color="#3d5496"/><stop offset="1" stop-color="#1d2a55"/></radialGradient></defs><circle cx="8" cy="8" r="7.7" fill="url(#bl3)"/></svg>
<div class="t" style="left:1339px;top:630.30px;font-size:13.53px;line-height:15px;letter-spacing:0.119px;color:#d4d4d4;">Blue Cloth</div>
<svg style="left:1318px;top:647.8px;" width="16" height="16" viewBox="0 0 16 16"><defs><radialGradient id="bl4" cx=".45" cy=".33" r=".72"><stop offset="0" stop-color="#a03a3a"/><stop offset=".55" stop-color="#7a2626"/><stop offset="1" stop-color="#3a1010"/></radialGradient></defs><circle cx="8" cy="8" r="7.7" fill="url(#bl4)"/></svg>
<div class="t" style="left:1339px;top:649.30px;font-size:13.23px;line-height:15px;letter-spacing:0.000px;color:#d4d4d4;">Red Velvet</div>
<svg style="left:1318px;top:666.8px;" width="16" height="16" viewBox="0 0 16 16"><defs><radialGradient id="bl5" cx=".45" cy=".33" r=".72"><stop offset="0" stop-color="#fbf3e4"/><stop offset=".55" stop-color="#d8c8ae"/><stop offset="1" stop-color="#6a5a48"/></radialGradient></defs><circle cx="8" cy="8" r="7.7" fill="url(#bl5)"/></svg>
<div style="left:1339px;top:667px;width:108px;height:18px;overflow:hidden;"></div>
<div class="t" style="left:1339px;top:668.30px;font-size:13.46px;line-height:15px;letter-spacing:0.000px;color:#d4d4d4;">Soft Beige Leathe</div>
<div class="t" style="left:1301px;top:687.60px;font-size:12.52px;line-height:14px;letter-spacing:0.000px;color:#c4c4c4;">Glass</div>
<svg style="left:1294px;top:552px;" width="60" height="140" viewBox="0 0 60 140"><path d="M2 9.5H5M2 66.5H5M2 142H5" stroke="#9a9a9a" stroke-width="1"/>
<path d="M11.5 19V47.5H21M11.5 28.5H21M11.5 76V123.5H21M11.5 85.5H21M11.5 104.5H21" stroke="#8c8c8c" stroke-width="1" fill="none"/></svg>
<svg style="left:1294px;top:515px;" width="8" height="20" viewBox="0 0 8 20"><path d="M2 9H5" stroke="#9a9a9a" stroke-width="1"/></svg>
<div style="left:1293.6px;top:474.5px;width:1.8px;height:233px;background:#1d1d1d;"></div>
<div style="left:1284px;top:474px;width:2px;height:215px;background:#1e1e1e;"></div>
<div style="left:1286px;top:474px;width:6.2px;height:215px;background:#474747;"></div>
<div style="left:1292.2px;top:474px;width:1.6px;height:215px;background:#1e1e1e;"></div>
<div class="t ns" style="left:1285.8px;top:692.80px;font-size:14.09px;line-height:16px;letter-spacing:0.000px;color:#d0d0d0;">Non-Commercial Edition</div>
<div style="left:1281px;top:690px;width:3px;height:20px;background:#2d2d2d;"></div>
<div style="left:1284px;top:690px;width:2px;height:20px;background:#1e1e1e;"></div>
<div style="left:1286px;top:690px;width:6.2px;height:20px;background:#474747;"></div>
<div style="left:1292.2px;top:690px;width:1.8px;height:20px;background:#1e1e1e;"></div>
<div style="left:1448px;top:474.5px;width:16.5px;height:233px;background:#262626;"></div>
<div style="left:1448.5px;top:476px;width:15.5px;height:21.5px;background:linear-gradient(90deg,#505050,#3d3d3d);border:1px solid #1a1a1a;"></div>
<svg style="left:1452.8px;top:481.5px;" width="9" height="11" viewBox="0 0 9 11"><rect x="0.0" y="0.0" width="1.600" height="1.600" fill="#080808"/><rect x="0.0" y="2.6" width="1.600" height="1.600" fill="#080808"/><rect x="0.0" y="5.2" width="1.600" height="1.600" fill="#080808"/><rect x="0.0" y="7.8" width="1.600" height="1.600" fill="#080808"/><rect x="2.6" y="0.0" width="1.600" height="1.600" fill="#080808"/><rect x="2.6" y="2.6" width="1.600" height="1.600" fill="#080808"/><rect x="2.6" y="5.2" width="1.600" height="1.600" fill="#080808"/><rect x="2.6" y="7.8" width="1.600" height="1.600" fill="#080808"/><rect x="5.2" y="0.0" width="1.600" height="1.600" fill="#080808"/><rect x="5.2" y="2.6" width="1.600" height="1.600" fill="#080808"/><rect x="5.2" y="5.2" width="1.600" height="1.600" fill="#080808"/><rect x="5.2" y="7.8" width="1.600" height="1.600" fill="#080808"/></svg>
<div class="btn" style="left:1448.5px;top:665px;width:15.5px;height:21.5px;"></div>
<svg style="left:1452.6px;top:671.5px;" width="8" height="7" viewBox="0 0 8 7"><path d="M0 6L3.7 0L7.4 6Z" fill="#555"/></svg>
<div class="btn" style="left:1448.5px;top:687px;width:15.5px;height:20.5px;"></div>
<svg style="left:1452.6px;top:694.5px;" width="8" height="7" viewBox="0 0 8 7"><path d="M0 0H7.4L3.7 6Z" fill="#8a8a8a"/></svg>
<div style="left:1296px;top:709.5px;width:152px;height:15.5px;background:#262626;"></div>
<div style="left:1297.5px;top:710px;width:71.5px;height:14.5px;background:linear-gradient(#4a4a4a,#3a3a3a);border:1px solid #1a1a1a;"></div>
<svg style="left:1328.5px;top:713.5px;" width="13" height="9" viewBox="0 0 13 9"><rect x="0.0" y="0.0" width="1.2" height="1.2" fill="#0c0c0c"/><rect x="0.0" y="2.1" width="1.2" height="1.2" fill="#0c0c0c"/><rect x="0.0" y="4.2" width="1.2" height="1.2" fill="#0c0c0c"/><rect x="0.0" y="6.3" width="1.2" height="1.2" fill="#0c0c0c"/><rect x="2.1" y="0.0" width="1.2" height="1.2" fill="#0c0c0c"/><rect x="2.1" y="2.1" width="1.2" height="1.2" fill="#0c0c0c"/><rect x="2.1" y="4.2" width="1.2" height="1.2" fill="#0c0c0c"/><rect x="2.1" y="6.3" width="1.2" height="1.2" fill="#0c0c0c"/><rect x="4.2" y="0.0" width="1.2" height="1.2" fill="#0c0c0c"/><rect x="4.2" y="2.1" width="1.2" height="1.2" fill="#0c0c0c"/><rect x="4.2" y="4.2" width="1.2" height="1.2" fill="#0c0c0c"/><rect x="4.2" y="6.3" width="1.2" height="1.2" fill="#0c0c0c"/><rect x="6.3" y="0.0" width="1.2" height="1.2" fill="#0c0c0c"/><rect x="6.3" y="2.1" width="1.2" height="1.2" fill="#0c0c0c"/><rect x="6.3" y="4.2" width="1.2" height="1.2" fill="#0c0c0c"/><rect x="6.3" y="6.3" width="1.2" height="1.2" fill="#0c0c0c"/><rect x="8.4" y="0.0" width="1.2" height="1.2" fill="#0c0c0c"/><rect x="8.4" y="2.1" width="1.2" height="1.2" fill="#0c0c0c"/><rect x="8.4" y="4.2" width="1.2" height="1.2" fill="#0c0c0c"/><rect x="8.4" y="6.3" width="1.2" height="1.2" fill="#0c0c0c"/><rect x="10.5" y="0.0" width="1.2" height="1.2" fill="#0c0c0c"/><rect x="10.5" y="2.1" width="1.2" height="1.2" fill="#0c0c0c"/><rect x="10.5" y="4.2" width="1.2" height="1.2" fill="#0c0c0c"/><rect x="10.5" y="6.3" width="1.2" height="1.2" fill="#0c0c0c"/></svg>
<div class="btn" style="left:1404px;top:709.5px;width:22px;height:15.5px;"></div>
<svg style="left:1411px;top:713.5px;" width="7" height="8" viewBox="0 0 7 8"><path d="M6 0V7.4L0 3.7Z" fill="#8a8a8a"/></svg>
<div class="btn" style="left:1426px;top:709.5px;width:21.5px;height:15.5px;"></div>
<svg style="left:1433.5px;top:713.5px;" width="7" height="8" viewBox="0 0 7 8"><path d="M0 0V7.4L6 3.7Z" fill="#8a8a8a"/></svg>
<div class="t" style="left:1297px;top:730.30px;font-size:13.86px;line-height:16px;letter-spacing:0.140px;color:#d6d6d6;">Filter</div>
<div class="field" style="left:1334.5px;top:727.5px;width:92px;height:25px;"></div>
<div class="btn" style="left:1426.5px;top:727.5px;width:21px;height:25px;"></div>
<svg style="left:1433px;top:736.5px;" width="8" height="7" viewBox="0 0 8 7"><path d="M0 0H7.4L3.7 6Z" fill="#9a9a9a"/></svg>
<div style="left:1464.7px;top:441.5px;width:1.5px;height:311.5px;background:#1e1e1e;"></div>
<div style="left:1466.2px;top:441.5px;width:5.8px;height:311.5px;background:#474747;"></div>
<div style="left:1472px;top:441.5px;width:1.4px;height:311.5px;background:#1e1e1e;"></div>
<svg style="left:1468.5px;top:584px;" width="5" height="22" viewBox="0 0 5 22"><rect x="0.0" y="0.0" width="1" height="1" fill="#6a6a6a"/><rect x="0.0" y="2.2" width="1" height="1" fill="#6a6a6a"/><rect x="0.0" y="4.4" width="1" height="1" fill="#6a6a6a"/><rect x="0.0" y="6.6" width="1" height="1" fill="#6a6a6a"/><rect x="0.0" y="8.8" width="1" height="1" fill="#6a6a6a"/><rect x="0.0" y="11.0" width="1" height="1" fill="#6a6a6a"/><rect x="0.0" y="13.2" width="1" height="1" fill="#6a6a6a"/><rect x="0.0" y="15.4" width="1" height="1" fill="#6a6a6a"/><rect x="0.0" y="17.6" width="1" height="1" fill="#6a6a6a"/><rect x="0.0" y="19.8" width="1" height="1" fill="#6a6a6a"/><rect x="2.1" y="0.0" width="1" height="1" fill="#6a6a6a"/><rect x="2.1" y="2.2" width="1" height="1" fill="#6a6a6a"/><rect x="2.1" y="4.4" width="1" height="1" fill="#6a6a6a"/><rect x="2.1" y="6.6" width="1" height="1" fill="#6a6a6a"/><rect x="2.1" y="8.8" width="1" height="1" fill="#6a6a6a"/><rect x="2.1" y="11.0" width="1" height="1" fill="#6a6a6a"/><rect x="2.1" y="13.2" width="1" height="1" fill="#6a6a6a"/><rect x="2.1" y="15.4" width="1" height="1" fill="#6a6a6a"/><rect x="2.1" y="17.6" width="1" height="1" fill="#6a6a6a"/><rect x="2.1" y="19.8" width="1" height="1" fill="#6a6a6a"/></svg>
<svg style="left:1478.5px;top:446.5px;" width="23" height="23" viewBox="0 0 23 23"><g fill="none" stroke="#ececec" stroke-width="2.900"><path d="M3.300 10.200A8.300 8.300 0 0 1 17 5.200"/><path d="M19.700 12.800A8.300 8.300 0 0 1 6 17.800"/></g>
<path d="M13 7.300L21.300 8.800L20.800 0.800Z" fill="#ececec"/><path d="M10 15.700L1.700 14.200L2.200 22.200Z" fill="#ececec"/></svg>
<svg style="left:1508.3px;top:446.6px;" width="24" height="24" viewBox="0 0 24 24"><g transform="translate(11 11)" fill="#e9e9e9"><rect x="-1.600" y="-10.0" width="3.200" height="4.5" rx=".9" transform="rotate(0)"/><rect x="-1.600" y="-10.0" width="3.200" height="4.5" rx=".9" transform="rotate(45)"/><rect x="-1.600" y="-10.0" width="3.200" height="4.5" rx=".9" transform="rotate(90)"/><rect x="-1.600" y="-10.0" width="3.200" height="4.5" rx=".9" transform="rotate(135)"/><rect x="-1.600" y="-10.0" width="3.200" height="4.5" rx=".9" transform="rotate(180)"/><rect x="-1.600" y="-10.0" width="3.200" height="4.5" rx=".9" transform="rotate(225)"/><rect x="-1.600" y="-10.0" width="3.200" height="4.5" rx=".9" transform="rotate(270)"/><rect x="-1.600" y="-10.0" width="3.200" height="4.5" rx=".9" transform="rotate(315)"/><path fill-rule="evenodd" d="M0 -6.500A6.500 6.500 0 1 0 0 6.500A6.500 6.500 0 1 0 0 -6.500ZM0 -3.300A3.300 3.300 0 1 1 0 3.300A3.300 3.300 0 1 1 0 -3.300Z"/></g><path d="M16.500 19.500h6.400l-3.200 3.600z" fill="#7b7b7b"/></svg>
<div class="btn" style="left:1537px;top:444px;width:78px;height:26px;"></div>
<div class="t" style="left:1557.25px;top:450.00px;font-size:13.49px;line-height:15px;letter-spacing:0.000px;color:#d8d8d8;">Select</div>
<div class="btn" style="left:1619.8px;top:444px;width:81px;height:26px;"></div>
<div class="t" style="left:1640px;top:450.00px;font-size:12.99px;line-height:15px;letter-spacing:0.000px;color:#d8d8d8;">Assign</div>
<svg style="left:1868px;top:445px;" width="25" height="25" viewBox="0 0 25 25"><circle cx="12.5" cy="12.5" r="11" fill="#2a2a2a" stroke="#e0e0e0" stroke-width="1.6"/><text x="12.5" y="18" font-size="15.5" font-weight="bold" font-family="Liberation Sans, sans-serif" text-anchor="middle" fill="#e8e8e8">?</text></svg>
<div style="left:1474px;top:476.2px;width:410px;height:20.3px;background:linear-gradient(#505050,#3c3c3c);border-top:1px solid #2a2a2a;"></div>
<svg style="left:1480.5px;top:482.5px;" width="7" height="7" viewBox="0 0 7 7"><path d="M0 0H6.4L3.2 5.6Z" fill="#e0e0e0"/></svg>
<div class="t" style="left:1495px;top:477.30px;font-size:13.86px;line-height:16px;letter-spacing:0.848px;color:#dadada;">/mat</div>
<div class="t" style="left:1847.5px;top:478.30px;font-size:13.53px;line-height:15px;letter-spacing:0.269px;color:#d0d0d0;">(1 child</div>
<div style="left:1474px;top:496.5px;width:410px;height:201px;background:#272727;"></div>
<div style="left:1474px;top:497px;width:105.5px;height:105.5px;background:#484848;border-left:1.5px solid #e4e4e4;border-top:1px solid #9a9a9a;border-right:1px solid #3a3a3a;border-bottom:1px solid #3a3a3a;"></div>
<div class="t" style="left:1481px;top:581.50px;font-size:13.42px;line-height:15px;letter-spacing:0.580px;color:#dcdcdc;">principledsh…</div>
<div style="left:1474px;top:697.5px;width:410px;height:21px;background:linear-gradient(#505050,#3c3c3c);border-top:1px solid #1f1f1f;"></div>
<svg style="left:1481px;top:704.5px;" width="7" height="8" viewBox="0 0 7 8"><path d="M0 0V6.6L5.8 3.3Z" fill="#e0e0e0"/></svg>
<div class="t" style="left:1495px;top:699.80px;font-size:13.86px;line-height:16px;letter-spacing:0.399px;color:#dadada;">/shop</div>
<div class="t" style="left:1827px;top:700.80px;font-size:13.53px;line-height:15px;letter-spacing:0.283px;color:#d0d0d0;">(0 children</div>
<div style="left:1474px;top:718.5px;width:410px;height:34.5px;background:#3a3a3a;"></div>
<div class="t" style="left:1477px;top:729.00px;font-size:13.53px;line-height:15px;letter-spacing:0.077px;color:#d6d6d6;">Filter materials in the sce…</div>
<div class="field" style="left:1651.5px;top:724px;width:184px;height:25px;"></div>
<svg style="left:1840.5px;top:726px;" width="22" height="22" viewBox="0 0 22 22"><path d="M1 6L11 1.5L21 6L11 10.5Z" fill="#f0f0ec"/><path d="M1 6L11 10.5V21L1 16Z" fill="#d4d4ce"/><path d="M11 10.5L21 6V16L11 21Z" fill="#8a8a84"/></svg>
<svg style="left:1868.5px;top:725px;" width="24" height="24" viewBox="0 0 24 24"><path d="M12 1L21.5 6.5V17.5L12 23L2.500 17.5V6.5Z" fill="none" stroke="#ddd" stroke-width="1.5"/><path d="M12 4.8L18.2 8.4V15.6L12 19.2L5.8 15.6V8.4Z" fill="none" stroke="#ddd" stroke-width="1.3"/></svg>
<svg style="left:1487px;top:499px;" width="81" height="80" viewBox="0 0 81 80"><defs><linearGradient id="cw" x1="0" y1="0" x2="1" y2="0"><stop offset="0" stop-color="#c4d8ea"/><stop offset=".35" stop-color="#f4f8fb"/><stop offset="1" stop-color="#bcd0e2"/></linearGradient>
<linearGradient id="cw2" x1="0" y1="0" x2="0" y2="1"><stop offset="0" stop-color="#eef4f9"/><stop offset="1" stop-color="#c6d8e8"/></linearGradient>
<linearGradient id="cc" x1="0" y1="0" x2="1" y2="0"><stop offset="0" stop-color="#a8dcf4"/><stop offset="1" stop-color="#58a0d0"/></linearGradient>
<linearGradient id="cg" x1="0" y1="0" x2="1" y2="0"><stop offset="0" stop-color="#fcd840"/><stop offset="1" stop-color="#c08a08"/></linearGradient>
<linearGradient id="cd" x1="0" y1="0" x2="0" y2="1"><stop offset="0" stop-color="#c8880c"/><stop offset="1" stop-color="#6a3c04"/></linearGradient></defs>
<g stroke="#86b0d6" stroke-width=".6" stroke-linejoin="round">
<!-- upper towers -->
<path d="M38.200 10.400H46.600V33.600H38.200Z" fill="url(#cw)"/><path d="M37.500 10.400H47.300V13H37.500ZM35.600 25.800H49.200V29.200H35.600Z" fill="url(#cw2)"/>
<path d="M39.500 9.700L42.400 .6L45.300 9.700Z" fill="url(#cg)" stroke="#b08008"/>
<path d="M33.400 13H37.500V23.300Q35.500 24.500 33.400 22Z" fill="url(#cw)"/><path d="M34 12.700L36 6.700L37.500 12.700Z" fill="url(#cg)" stroke="#b08008"/>
<path d="M53 15.500H58.200V33.600H53Z" fill="url(#cw)"/><path d="M51 24H60.800V27.500L58.500 30H53L51 27.500Z" fill="url(#cw2)"/><path d="M53.300 15.500L55.600 8.400L57.900 15.500Z" fill="url(#cg)" stroke="#b08008"/>
<path d="M24 25.200H29.800V33.600H24Z" fill="url(#cw)"/><path d="M24.200 25.200L26.500 16.200L29.200 25.200Z" fill="url(#cg)" stroke="#b08008"/>
<!-- keep -->
<path d="M24 38H59.500V55H24Z" fill="url(#cw)"/>
<path d="M22 32.400H26V34.200H29V32.400H34V34.200H37.500V32.400H47.500V34.200H51V32.400H56V34.200H59V32.400H63.400V38.200H22Z" fill="url(#cw2)"/>
<path d="M24 45.300H28V46.800H31V45.300H36V46.800H47V45.300H52V46.800H55.500V45.300H59.500V48.500H24Z" fill="url(#cw2)"/>
<path d="M36.800 45L41.400 38.500L46 45Z" fill="#3aa6c8" stroke="#2a86a8"/>
<path d="M24.500 54.500L27 50.500H31V54.500ZM59 54.500L56.500 51H52.500V54.500Z" fill="#48b0d0" stroke="none"/>
<!-- low walls -->
<path d="M13 57H16V58.800H19.500V57H24V58.800H27V57H30.400V77H13Z" fill="url(#cw2)"/><path d="M53 57H56.500V58.800H60V57H64V58.800H66.500V57H68.600V77H53Z" fill="url(#cw2)"/>
<path d="M13 60.500H30.400M53 60.500H68.600" stroke="#6aa8dc" stroke-width="1"/>
<!-- outer towers -->
<path d="M2.600 55.600H13.600L14.500 77.600H1.700Z" fill="url(#cw)"/><path d="M1.700 51.500H14.200V55.600H1.700Z" fill="url(#cw2)"/><path d="M2.600 49.200L7.800 35L13 49.200Q7.800 51.500 2.600 49.200Z" fill="url(#cc)" stroke="#5a9cd0"/>
<path d="M68 55.600H79L79.900 77.600H67.100Z" fill="url(#cw)"/><path d="M67.300 51.500H79.800V55.600H67.300Z" fill="url(#cw2)"/><path d="M67.800 49.200L73 35L78.200 49.200Q73 51.500 67.800 49.200Z" fill="url(#cc)" stroke="#5a9cd0"/>
<!-- gate block -->
<path d="M30.400 53L41.400 43L53 53V78.300H30.400Z" fill="url(#cw)"/>
</g>
<path d="M29.500 53.600H33.500L41.400 43L49.500 53.600H53.800" fill="none" stroke="#e8c020" stroke-width="1.700" stroke-linejoin="miter"/>
<path d="M37.300 78.300V66.500Q37.300 62.800 42 62.800Q46.800 62.800 46.800 66.500V78.300Z" fill="url(#cd)" stroke="#5a3404" stroke-width=".5"/>
<g fill="#e8b020"><circle cx="38.800" cy="74.500" r=".6"/><circle cx="45.300" cy="74.500" r=".6"/><circle cx="38.800" cy="67" r=".6"/><circle cx="45.300" cy="67" r=".6"/></g></svg>
<div style="left:0px;top:753.5px;width:9px;height:87px;background:#484848;"></div>
<div style="left:9px;top:753.5px;width:1.4px;height:87px;background:#060606;"></div>
<div style="left:10.4px;top:753px;width:1873.6px;height:2px;background:linear-gradient(#3a3a3a,#4a4a4a);"></div>
<div style="left:10.4px;top:755px;width:1873.6px;height:85.5px;background:#2e2e2e;"></div>
<svg style="left:0.5px;top:832px;" width="8" height="7" viewBox="0 0 8 7"><path d="M0 0H7.4L3.7 6.3Z" fill="#000"/></svg>
<div style="left:0px;top:840.5px;width:1884px;height:1.2px;background:#1a1a1a;"></div>
<div style="left:0px;top:841.7px;width:1884px;height:8.3px;background:#3a3a3a;"></div>
<div style="left:1761px;top:842px;width:113.5px;height:8px;background:#484848;border-left:1px solid #555;border-top:1px solid #555;"></div>
<svg style="left:1700px;top:846.3px;" width="60" height="8" viewBox="0 0 60 8"><circle cx="12" cy="9" r="7.5" fill="#777"/><circle cx="42" cy="10" r="8.5" fill="#5e5e5e"/></svg>
<svg width="0" height="0" style="left:0;top:0"><defs><linearGradient id="wg" x1="0" y1="0" x2="0" y2="1"><stop offset="0" stop-color="#fafaf8"/><stop offset="1" stop-color="#c9c9c4"/></linearGradient></defs></svg>
<div style="left:15px;top:763.3px;width:33.5px;height:34.6px;background:linear-gradient(#4d4d4d,#383838);border:1px solid #1b1b1b;box-shadow:inset 0 1px 0 rgba(255,255,255,.07);"></div>
<svg style="left:15px;top:763.3px;" width="33.5" height="34.6" viewBox="0 0 33.5 34.6"><g fill="url(#wg)"><rect x="5" y="10" width="3.6" height="13.5"/><path d="M19.5 10V23.5L9.5 16.7Z"/><path d="M30 10V23.5L20 16.7Z"/></g></svg>
<div style="left:49px;top:763.3px;width:33.5px;height:34.6px;background:linear-gradient(#4d4d4d,#383838);border:1px solid #1b1b1b;box-shadow:inset 0 1px 0 rgba(255,255,255,.07);"></div>
<svg style="left:49px;top:763.3px;" width="33.5" height="34.6" viewBox="0 0 33.5 34.6"><path d="M24 8.5V25L10.5 16.7Z" fill="url(#wg)"/></svg>
<div style="left:83px;top:763.3px;width:33.5px;height:34.6px;background:linear-gradient(90deg,#8fa0a8,#9fb0b6 12%,#a3b2b8 88%,#6f7f86);border:1px solid #b9c6cb;"></div>
<svg style="left:83px;top:763.3px;" width="33.5" height="34.6" viewBox="0 0 33.5 34.6"><rect x="8.5" y="8.5" width="16.5" height="17" fill="url(#wg)" stroke="#66665f" stroke-width="1"/></svg>
<div style="left:117px;top:763.3px;width:33.5px;height:34.6px;background:linear-gradient(#4d4d4d,#383838);border:1px solid #1b1b1b;box-shadow:inset 0 1px 0 rgba(255,255,255,.07);"></div>
<svg style="left:117px;top:763.3px;" width="33.5" height="34.6" viewBox="0 0 33.5 34.6"><path d="M10.500 8.5V25L24 16.7Z" fill="url(#wg)"/></svg>
<div style="left:151px;top:763.3px;width:33.5px;height:34.6px;background:linear-gradient(#4d4d4d,#383838);border:1px solid #1b1b1b;box-shadow:inset 0 1px 0 rgba(255,255,255,.07);"></div>
<svg style="left:151px;top:763.3px;" width="33.5" height="34.6" viewBox="0 0 33.5 34.6"><g fill="url(#wg)"><path d="M4 10V23.5L14 16.7Z"/><path d="M14.500 10V23.5L24.500 16.7Z"/><rect x="25.500" y="10" width="3.6" height="13.5"/></g></svg>
<div class="field" style="left:188.5px;top:763.3px;width:57px;height:34.6px;"></div>
<div class="t ns" style="left:192.5px;top:773.60px;font-size:12.40px;line-height:15px;letter-spacing:0.000px;font-family:'DejaVu Sans','Liberation Sans',sans-serif;color:#e4e4e4;">1</div>
<div style="left:247.6px;top:763.3px;width:17px;height:34.6px;background:linear-gradient(#4d4d4d,#383838);border:1px solid #1b1b1b;box-shadow:inset 0 1px 0 rgba(255,255,255,.07);"></div>
<svg style="left:247.6px;top:763.3px;" width="17" height="34.6" viewBox="0 0 17 34.6"><path d="M9 11.5V22L3 16.7Z" fill="url(#wg)"/><rect x="10.500" y="11.5" width="2.6" height="10.5" fill="url(#wg)"/></svg>
<div style="left:264.8px;top:763.3px;width:17px;height:34.6px;background:linear-gradient(#4d4d4d,#383838);border:1px solid #1b1b1b;box-shadow:inset 0 1px 0 rgba(255,255,255,.07);"></div>
<svg style="left:264.8px;top:763.3px;" width="17" height="34.6" viewBox="0 0 17 34.6"><path d="M8 11.5V22L14 16.7Z" fill="url(#wg)"/><rect x="4" y="11.5" width="2.600" height="10.5" fill="url(#wg)"/></svg>
<div style="left:15px;top:808px;width:33.5px;height:29.5px;background:linear-gradient(#4d4d4d,#383838);border:1px solid #1b1b1b;box-shadow:inset 0 1px 0 rgba(255,255,255,.07);"></div>
<svg style="left:15px;top:808px;" width="33.5" height="29.5" viewBox="0 0 33.5 29.5"><rect x="9.5" y="4" width="16" height="3" fill="#9c9c96"/><rect x="9.500" y="8.500" width="16" height="13" fill="#f2f2ee" stroke="#555" stroke-width=".6"/><path d="M18 13.500L28.500 21L23.700 21.600L25.700 25.800L23.600 26.800L21.700 22.600L18.400 25.500Z" fill="#111" stroke="#eee" stroke-width=".9"/></svg>
<div style="left:49px;top:808px;width:33.5px;height:29.5px;background:linear-gradient(#4d4d4d,#383838);border:1px solid #1b1b1b;box-shadow:inset 0 1px 0 rgba(255,255,255,.07);"></div>
<svg style="left:49px;top:808px;" width="33.5" height="29.5" viewBox="0 0 33.5 29.5"><path d="M7 11.500H12.500L18 6.500V23.500L12.500 18.500H7Z" fill="#8e9a9f" stroke="#444" stroke-width=".6"/><ellipse cx="19" cy="15" rx="8.300" ry="11" fill="#50606a" fill-opacity=".55" stroke="#e2e6e8" stroke-width="1.200"/><ellipse cx="17.500" cy="15" rx="2.200" ry="3.500" fill="#b9c3c7"/></svg>
<div style="left:83px;top:808px;width:33.5px;height:29.5px;background:linear-gradient(#4d4d4d,#383838);border:1px solid #1b1b1b;box-shadow:inset 0 1px 0 rgba(255,255,255,.07);"></div>
<svg style="left:83px;top:808px;" width="33.5" height="29.5" viewBox="0 0 33.5 29.5"><path d="M7 20.500H26.500Q27 10 17.500 9.500V6L8 11.800L17.500 17V13.500Q22 14.500 21.500 17.500H7Z" fill="#f4f4f2" stroke="#111" stroke-width="1.100" stroke-linejoin="round"/><path d="M24 23h6.600l-3.300 3.800z" fill="#7b7b7b"/></svg>
<div style="left:117px;top:808px;width:33.5px;height:29.5px;background:linear-gradient(#4d4d4d,#383838);border:1px solid #1b1b1b;box-shadow:inset 0 1px 0 rgba(255,255,255,.07);"></div>
<svg style="left:117px;top:808px;" width="33.5" height="29.5" viewBox="0 0 33.5 29.5"><circle cx="16.700" cy="14.800" r="10.300" fill="#1e1e1e" stroke="#dcdcdc" stroke-width="1.500"/><circle cx="16.700" cy="14.800" r="7" fill="none" stroke="#e6e6e6" stroke-width="1.300"/><path d="M16.700 10.500V19M12.500 14.800H21" stroke="#f0f0f0" stroke-width="1.600"/></svg>
<div style="left:154.8px;top:808px;width:29.2px;height:29.5px;background:linear-gradient(#3b3b3b,#323232);border:1px solid #222;"></div>
<svg style="left:154.8px;top:808px;" width="29.2" height="29.5" viewBox="0 0 29.2 29.5"><rect x="8.500" y="9" width="3" height="11" fill="#34452a" stroke="#485c38" stroke-width=".8"/><path d="M21.500 9.500V19.500L13.500 14.500Z" fill="#585858"/></svg>
<div style="left:184px;top:808px;width:28.5px;height:29.5px;background:linear-gradient(#3b3b3b,#323232);border:1px solid #222;"></div>
<svg style="left:184px;top:808px;" width="28.5" height="29.5" viewBox="0 0 28.5 29.5"><rect x="17.500" y="9" width="3" height="11" fill="#34452a" stroke="#485c38" stroke-width=".8"/><path d="M7.500 9.500V19.500L15.500 14.500Z" fill="#585858"/></svg>
<svg style="left:0px;top:0px;pointer-events:none;" width="1884" height="850" viewBox="0 0 1884 850"><path d="M287.8 782.5H1589M314.9 776.8V787.5M347.4 776.8V787.5M380.0 776.8V787.5M412.5 773.8V791.6M445.0 776.8V787.5M477.5 776.8V787.5M510.1 776.8V787.5M542.6 773.8V791.6M575.1 776.8V787.5M607.7 776.8V787.5M640.2 776.8V787.5M672.7 773.8V791.6M705.2 776.8V787.5M737.8 776.8V787.5M770.3 776.8V787.5M802.8 773.8V791.6M835.4 776.8V787.5M867.9 776.8V787.5M900.4 776.8V787.5M932.9 773.8V791.6M965.5 776.8V787.5M998.0 776.8V787.5M1030.5 776.8V787.5M1063.1 773.8V791.6M1095.6 776.8V787.5M1128.1 776.8V787.5M1160.6 776.8V787.5M1193.2 773.8V791.6M1225.7 776.8V787.5M1258.2 776.8V787.5M1290.8 776.8V787.5M1323.3 773.8V791.6M1355.8 776.8V787.5M1388.3 776.8V787.5M1420.9 776.8V787.5M1453.4 773.8V791.6M1485.9 776.8V787.5M1518.5 776.8V787.5M1551.0 776.8V787.5M1583.5 773.8V791.6" stroke="#c4c4c4" stroke-width="1" fill="none"/></svg>
<div class="t ns" style="left:412.792px;top:757.00px;font-size:11.20px;line-height:12px;letter-spacing:0.000px;color:#9a9a9a;">24</div>
<div class="t ns" style="left:542.906px;top:757.00px;font-size:11.20px;line-height:12px;letter-spacing:0.000px;color:#9a9a9a;">48</div>
<div class="t ns" style="left:673.019px;top:757.00px;font-size:11.20px;line-height:12px;letter-spacing:0.000px;color:#9a9a9a;">72</div>
<div class="t ns" style="left:803.133px;top:757.00px;font-size:11.20px;line-height:12px;letter-spacing:0.000px;color:#9a9a9a;">96</div>
<div class="t ns" style="left:933.247px;top:757.00px;font-size:11.20px;line-height:12px;letter-spacing:0.000px;color:#9a9a9a;">120</div>
<div class="t ns" style="left:1063.36px;top:757.00px;font-size:11.20px;line-height:12px;letter-spacing:0.000px;color:#9a9a9a;">144</div>
<div class="t ns" style="left:1193.47px;top:757.00px;font-size:11.20px;line-height:12px;letter-spacing:0.000px;color:#9a9a9a;">168</div>
<div class="t ns" style="left:1323.59px;top:757.00px;font-size:11.20px;line-height:12px;letter-spacing:0.000px;color:#9a9a9a;">192</div>
<div class="t ns" style="left:1453.7px;top:757.00px;font-size:11.20px;line-height:12px;letter-spacing:0.000px;color:#9a9a9a;">216</div>
<div style="left:1583.5px;top:757px;width:5px;height:12px;overflow:hidden;"></div>
<div class="t ns" style="left:1584.8px;top:757.00px;font-size:11.20px;line-height:12px;letter-spacing:0.000px;color:#9a9a9a;width:4.2px;overflow:hidden;">2</div>
<div style="left:1584px;top:756px;width:7px;height:6.6px;background:#2e2e2e;"></div>
<svg style="left:286px;top:756px;" width="34" height="28" viewBox="0 0 34 28"><path d="M1.5 1.500H32V19.800H9L1.500 26.500Z" fill="#050505" stroke="#f2f2f2" stroke-width="1.200"/></svg>
<div class="t ns" style="left:298.5px;top:761.00px;font-size:13.20px;line-height:15px;letter-spacing:0.000px;font-family:'DejaVu Sans','Liberation Sans',sans-serif;color:#f4f4f4;">1</div>
<div style="left:287.4px;top:808.7px;width:52px;height:27px;background:#222;border:1px solid #2b2b2b;"></div>
<div class="t ns" style="left:291.5px;top:814.50px;font-size:12.40px;line-height:15px;letter-spacing:0.000px;font-family:'DejaVu Sans','Liberation Sans',sans-serif;color:#e4e4e4;">1</div>
<div class="field" style="left:342.7px;top:808.7px;width:52px;height:27px;"></div>
<div class="t ns" style="left:346.5px;top:814.50px;font-size:12.40px;line-height:15px;letter-spacing:0.000px;font-family:'DejaVu Sans','Liberation Sans',sans-serif;color:#e4e4e4;">1</div>
<div style="left:402px;top:820.7px;width:1073px;height:4px;background:#777;"></div>
<svg style="left:396px;top:816.5px;" width="8" height="13" viewBox="0 0 8 13"><path d="M0.500 0V12.500L7.500 6.200Z" fill="#9a9a9a"/></svg>
<svg style="left:1472.5px;top:816.5px;" width="8" height="13" viewBox="0 0 8 13"><path d="M7 0V12.500L0 6.200Z" fill="#9a9a9a"/></svg>
<div class="field" style="left:1481.7px;top:808.7px;width:51.5px;height:27px;"></div>
<div class="t ns" style="left:1485.5px;top:814.50px;font-size:13.36px;line-height:15px;letter-spacing:0.000px;font-family:'DejaVu Sans','Liberation Sans',sans-serif;color:#e8e8e8;">240</div>
<div style="left:1536.7px;top:808.7px;width:52px;height:27px;background:#222;border:1px solid #2b2b2b;"></div>
<div class="t ns" style="left:1540.5px;top:814.50px;font-size:13.36px;line-height:15px;letter-spacing:0.000px;font-family:'DejaVu Sans','Liberation Sans',sans-serif;color:#e8e8e8;">240</div>
<div style="left:1640px;top:783.5px;width:20.5px;height:26px;background:linear-gradient(#3d3d3d,#333);border:1px solid #242424;"></div>
<svg style="left:1644.5px;top:792.5px;" width="8" height="7" viewBox="0 0 8 7"><path d="M0 0H7.400L3.700 6Z" fill="#8c8c8c"/></svg>
<div style="left:1592.5px;top:772.5px;width:49px;height:49px;background:#323232;border:1px solid #262626;border-radius:50%;"></div>
<svg style="left:1603px;top:783px;" width="28" height="28" viewBox="0 0 28 28"><g fill="none" stroke="#5d5d5d"><ellipse cx="17.600" cy="11" rx="4.300" ry="5" stroke-width="2.300" transform="rotate(35 17.600 11)"/><path d="M14.600 14.800L6.200 21.800M7.800 20.400L10.200 23.200M10.600 18.100L12.800 20.700" stroke-width="2.200"/></g></svg>
<div style="left:1668px;top:764.8px;width:28.7px;height:29px;background:#3c3c3c;border:1px solid #1a1a1a;"></div>
<svg style="left:1668px;top:764.8px;" width="29" height="29" viewBox="0 0 29 29"><rect x="5" y="4.500" width="17" height="19" fill="#5a5a5a"/><rect x="5.500" y="9.500" width="2.400" height="3" fill="#d03030"/><rect x="5.500" y="13" width="2.400" height="3" fill="#d0a030"/><rect x="5.500" y="16.500" width="2.400" height="3" fill="#3070d0"/><rect x="5.500" y="20" width="2.400" height="3" fill="#40b040"/><g fill="none" stroke="#f2f2f2" stroke-width="2"><path d="M10.500 12A6 6 0 0 1 21 9.500"/><path d="M22.500 15.500A6 6 0 0 1 12 18"/></g><path d="M18.500 10.500L23.500 11L23 6Z" fill="#f2f2f2"/><path d="M14.500 17L9.500 16.500L10 21.500Z" fill="#f2f2f2"/><path d="M23.500 21V27L27.500 24Z" fill="#8a8a8a"/></svg>
<div class="btn" style="left:1703px;top:764.8px;width:190px;height:29px;"></div>
<div class="t" style="left:1724.5px;top:771.50px;font-size:13.38px;line-height:15px;letter-spacing:0.000px;color:#d2d2d2;">0 keys, 0/0 channels</div>
<svg style="left:1877px;top:774px;" width="9" height="8" viewBox="0 0 9 8"><path d="M0 7L4.500 0L9 7Z" fill="#8a8a8a"/></svg>
<div style="left:1668px;top:799.5px;width:28.7px;height:29px;background:#3c3c3c;border:1px solid #1a1a1a;"></div>
<svg style="left:1668px;top:799.5px;" width="29" height="29" viewBox="0 0 29 29"><rect x="4.500" y="4.500" width="20" height="19.500" fill="#050505"/><path d="M5.500 14.500H24" stroke="#d8d8d8" stroke-width="1"/><path d="M5.500 14.500C8 7 11 7 14.500 14.500S21 22 24 14.500" fill="none" stroke="#e79a28" stroke-width="1.200" transform="translate(0 0) scale(1 .55) translate(0 11.800)"/><path d="M5.500 14.500C8 24 11.500 24 14.500 14.500S21 5 24 14.500" fill="none" stroke="#5d9fe0" stroke-width="1.200"/></svg>
<div class="btn" style="left:1701px;top:799.5px;width:192px;height:29px;"></div>
<div style="left:1870px;top:800.5px;width:20px;height:27px;background:linear-gradient(#343434,#2f2f2f);"></div>
<div class="t" style="left:1718px;top:806.50px;font-size:13.29px;line-height:15px;letter-spacing:0.000px;color:#d2d2d2;">Key All Channels</div>
<svg style="left:1878px;top:803px;" width="8" height="22" viewBox="0 0 8 22"><path d="M0 7L4 0L8 7ZM0 14H8L4 21Z" fill="#7a7a7a"/></svg>
<div style="left:7px;top:177px;width:41px;height:576px;background:#3a3a3a;"></div>
<div style="left:7px;top:177px;width:41px;height:12.5px;background:linear-gradient(#4c4c4c,#333);border-bottom:1px solid #111;"></div>
<svg style="left:9px;top:180px;" width="8" height="8" viewBox="0 0 8 8"><path d="M6.500 0V7.400L0 3.700Z" fill="#000"/></svg>
<svg width="0" height="0" style="left:0;top:0"><defs>
<linearGradient id="yel" x1="0" y1="0" x2="1" y2="1"><stop offset="0" stop-color="#fff3a0"/><stop offset=".5" stop-color="#f0cc2e"/><stop offset="1" stop-color="#c99a10"/></linearGradient>
<radialGradient id="gsph" cx=".38" cy=".32" r=".75"><stop offset="0" stop-color="#f4f6f7"/><stop offset=".5" stop-color="#9aa3a8"/><stop offset="1" stop-color="#454c50"/></radialGradient>
<radialGradient id="dsph" cx=".38" cy=".32" r=".75"><stop offset="0" stop-color="#9a9a9a"/><stop offset=".6" stop-color="#5a5a5a"/><stop offset="1" stop-color="#2a2a2a"/></radialGradient>
<linearGradient id="redg" x1="0" y1="0" x2="0" y2="1"><stop offset="0" stop-color="#ff4a30"/><stop offset="1" stop-color="#c01808"/></linearGradient>
<linearGradient id="org" x1="0" y1="0" x2="1" y2="1"><stop offset="0" stop-color="#ff9a30"/><stop offset="1" stop-color="#d82808"/></linearGradient>
<linearGradient id="cubg" x1="0" y1="0" x2="1" y2="1"><stop offset="0" stop-color="#e8eef2"/><stop offset="1" stop-color="#8799a5"/></linearGradient>
<linearGradient id="mag" x1="0" y1="0" x2="1" y2="0"><stop offset="0" stop-color="#d86a6a"/><stop offset=".5" stop-color="#c04848"/><stop offset="1" stop-color="#8a2c2c"/></linearGradient>
</defs></svg>
<div style="left:12px;top:196.8px;width:30.5px;height:29.5px;background:linear-gradient(#93a2a8,#b1bcbf);border:1px solid #c2cbce;border-right-color:#7d8b90;"></div>
<svg style="left:12px;top:196.8px;" width="31" height="30" viewBox="0 0 31 30"><circle cx="19.500" cy="10.500" r="6.800" fill="url(#dsph)"/><path d="M11 4.500L4.500 21.500Q11 26 17.500 21.500Z" fill="url(#yel)" stroke="#8a6a10" stroke-width=".8"/><path d="M24.5 21v7.600l5.200-3.800z" fill="#222"/></svg>
<div style="left:12px;top:226.3px;width:30.5px;height:30px;background:linear-gradient(#474747,#383838);border:1px solid #1c1c1c;"></div>
<svg style="left:12px;top:226.3px;" width="31" height="30" viewBox="0 0 31 30"><g transform="translate(15 14.500) rotate(45)"><rect x="-7" y="-7" width="6.500" height="6.500" fill="#80857f"/><rect x=".5" y="-7" width="6.500" height="6.500" fill="#80857f"/><rect x="-7" y=".5" width="6.500" height="6.500" fill="#80857f"/><rect x=".5" y=".5" width="6.500" height="6.500" fill="#f2d65a" stroke="#b8860b" stroke-width="1.200"/></g><path d="M24.5 21v7.600l5.200-3.800z" fill="#7a7a7a"/></svg>
<div style="left:12px;top:256.3px;width:30.5px;height:30px;background:linear-gradient(#474747,#383838);border:1px solid #1c1c1c;"></div>
<svg style="left:12px;top:256.3px;" width="31" height="30" viewBox="0 0 31 30"><path d="M4 6Q2 15 7 23L12 20V8Z" fill="#c9a21a" opacity=".55"/><path d="M9.500 9.500L17 4.500L26 10L19 15.500Z" fill="#f6e27a" stroke="#f8eeb0" stroke-width=".8"/><path d="M9.500 9.500L19 15.500L18.500 25.500L9.500 19Z" fill="#d6b21e" stroke="#f8eeb0" stroke-width=".8"/><path d="M19 15.500L26 10L25 19.500L18.500 25.500Z" fill="#a8860c" stroke="#f8eeb0" stroke-width=".8"/><path d="M24.5 21v7.600l5.200-3.800z" fill="#7a7a7a"/></svg>
<div style="left:9px;top:296.5px;width:37px;height:1px;background:#323232;"></div>
<svg style="left:18px;top:326px;" width="26" height="34" viewBox="0 0 26 34"><path d="M2.500 1.500V22L7.500 17.500L11.500 26.500L15 25L11 16.500H18Z" fill="#0a0a0a" stroke="#bdbdbd" stroke-width="1.100" stroke-linejoin="round"/><path d="M20.5 23.5v7.600l5.200-3.800z" fill="#7a7a7a"/></svg>
<div style="left:11px;top:359px;width:33px;height:33px;background:linear-gradient(#93a2a8,#b1bcbf);border:1px solid #c2cbce;border-right-color:#7d8b90;"></div>
<svg style="left:11px;top:359px;" width="33" height="33" viewBox="0 0 33 33"><path d="M11.500 15V10.500A5 5 0 0 1 21.500 10.500V15" fill="none" stroke="#f2f2f2" stroke-width="2.400"/><rect x="9.500" y="14" width="14" height="10.500" rx="1" fill="#f4f4f4"/><path d="M14 16V22.500L16 21L17.300 23.500L18.300 23L17.200 20.600H19.200Z" fill="#8f9ea4"/></svg>
<svg style="left:13px;top:397px;" width="30" height="26" viewBox="0 0 30 26"><g transform="translate(10 12) rotate(200) scale(1)"><path d="M0 -2.200H5V-5L11 0L5 5V2.200H0Z" fill="url(#redg)" stroke="#7a0c04" stroke-width=".5"/></g><g transform="translate(19 12) rotate(-20) scale(1)"><path d="M0 -2.200H5V-5L11 0L5 5V2.200H0Z" fill="url(#redg)" stroke="#7a0c04" stroke-width=".5"/></g><g transform="translate(11 18) rotate(150) scale(1)"><path d="M0 -2.200H5V-5L11 0L5 5V2.200H0Z" fill="url(#redg)" stroke="#7a0c04" stroke-width=".5"/></g><g transform="translate(18 18) rotate(30) scale(1)"><path d="M0 -2.200H5V-5L11 0L5 5V2.200H0Z" fill="url(#redg)" stroke="#7a0c04" stroke-width=".5"/></g><path d="M9 6.500L15.500 3.500L21 6L15 9Z" fill="#eef2f4"/><path d="M9 6.500L15 9V17L9.500 14Z" fill="#b4bec4"/><path d="M15 9L21 6V14L15 17Z" fill="#7f8d96"/></svg>
<svg style="left:13px;top:433px;" width="30" height="26" viewBox="0 0 30 26"><path d="M6.500 9Q1 13 5 18Q8 21 12 20L11.500 17Q8 17.500 6.500 15Q5.500 12.500 8.500 11Z" fill="url(#org)"/><path d="M23 9Q29 13 25 18Q22.500 20.500 19 20.500V23L12.500 19L19 14.500V17Q22 17 23.500 15Q24.500 12.500 21.500 11Z" fill="url(#org)"/><circle cx="14.500" cy="8.500" r="6.500" fill="url(#gsph)" stroke="#f0f0f0" stroke-width=".7"/></svg>
<svg style="left:13px;top:466px;" width="30" height="30" viewBox="0 0 30 30"><g transform="translate(14.5 11) rotate(-90) scale(0.95)"><path d="M0 -2.200H5V-5L11 0L5 5V2.200H0Z" fill="url(#redg)" stroke="#7a0c04" stroke-width=".5"/></g><g transform="translate(11 21) rotate(155) scale(0.95)"><path d="M0 -2.200H5V-5L11 0L5 5V2.200H0Z" fill="url(#redg)" stroke="#7a0c04" stroke-width=".5"/></g><g transform="translate(18 21) rotate(25) scale(0.95)"><path d="M0 -2.200H5V-5L11 0L5 5V2.200H0Z" fill="url(#redg)" stroke="#7a0c04" stroke-width=".5"/></g><path d="M8 10.500L14.500 7.500L21 10.500V19L14.500 22.500L8 19Z" fill="#6c747a" fill-opacity=".75" stroke="#4a5258" stroke-width=".6"/><path d="M11.500 13.500L14.500 12L17.500 13.500V17.500L14.500 19L11.500 17.500Z" fill="#dfe5e8"/></svg>
<svg style="left:13px;top:501px;" width="30" height="30" viewBox="0 0 30 30"><g fill="#ededed"><circle cx="9" cy="8" r="3.300"/><path d="M15.500 2Q17.500 6 16.500 9.500L14.500 9Q14.500 5 15.500 2Z"/><path d="M11 12L17.500 10L18.500 16L13.500 17.500Z"/><path d="M9.500 13L11 14.500Q8 18 6.500 21.500Q6 18 9.500 13Z"/><path d="M18.500 13L20.500 12.500Q22.500 17 23 21.500Q20 18 18.500 13Z"/><path d="M13.500 18.500L16.500 18Q17 22 15.500 27Q13.500 23 13.500 18.500Z"/></g><g fill="#e01818"><circle cx="16.200" cy="9.800" r="1.200"/><circle cx="14" cy="13.500" r="1.400"/><circle cx="9.800" cy="14" r="1.100"/><circle cx="19.500" cy="15" r="1.100"/><circle cx="14.500" cy="19.500" r="1.200"/></g></svg>
<svg style="left:13px;top:535px;" width="34" height="32" viewBox="0 0 34 32"><circle cx="14.500" cy="15.500" r="6.300" fill="none" stroke="#e8c820" stroke-width="2.600"/><path d="M14 15V8" stroke="#3cae2c" stroke-width="2.200"/><path d="M14 1.500L18 8.500H10Z" fill="#4cc83a"/><path d="M14.500 15.500L7.500 21" stroke="#3a78c8" stroke-width="2.200"/><path d="M1.500 25.500L5 18L10 23Z" fill="#6a9fe0"/><path d="M15 15.500L22 16" stroke="#d02020" stroke-width="2.200"/><path d="M27.500 17L20 12.500L20.500 20.500Z" fill="#e85050"/><circle cx="14.500" cy="15.500" r="2" fill="#ddd"/><path d="M26 24.5v7.600l5.200-3.800z" fill="#7a7a7a"/></svg>
<div style="left:11px;top:572.8px;width:35px;height:1px;background:#4a4a4a;"></div>
<svg style="left:13px;top:582px;" width="34" height="30" viewBox="0 0 34 30"><rect x="9" y="9" width="17" height="19" fill="#27302f" stroke="#cfd4d2" stroke-width="1.300"/><path d="M17.500 9V28M9 18.500H26" stroke="#cfd4d2" stroke-width="1.300"/><path d="M2.5 14.5v-6a7.500 7.500 0 0 1 15 0v6h-4.300v-6a3.200 3.200 0 0 0 -6.400 0v6z" fill="url(#mag)" stroke="#7a2020" stroke-width=".5"/><rect x="2.5" y="14.5" width="4.300" height="3.500" fill="#f4f4f4"/><rect x="13.2" y="14.5" width="4.300" height="3.500" fill="#f4f4f4"/><path d="M26.5 22.5v7.600l5.200-3.800z" fill="#7a7a7a"/></svg>
<svg style="left:13px;top:616px;" width="34" height="32" viewBox="0 0 34 32"><path d="M3 27Q9 17 17 19T27 11.500" fill="none" stroke="#1c2020" stroke-width="3"/><path d="M3 27Q9 17 17 19T27 11.500" fill="none" stroke="#e8ecea" stroke-width="1.400"/><path d="M2.5 14v-6a7.500 7.500 0 0 1 15 0v6h-4.300v-6a3.200 3.200 0 0 0 -6.400 0v6z" fill="url(#mag)" stroke="#7a2020" stroke-width=".5"/><rect x="2.5" y="14" width="4.300" height="3.500" fill="#f4f4f4"/><rect x="13.2" y="14" width="4.300" height="3.500" fill="#f4f4f4"/><path d="M26.5 22.5v7.600l5.200-3.800z" fill="#7a7a7a"/></svg>
<svg style="left:13px;top:653px;overflow:hidden;" width="30" height="13.5" viewBox="0 0 30 13.5"><path d="M2.5 15v-6a7.500 7.500 0 0 1 15 0v6h-4.300v-6a3.200 3.200 0 0 0 -6.400 0v6z" fill="url(#mag)" stroke="#7a2020" stroke-width=".5"/><rect x="2.5" y="15" width="4.300" height="3.500" fill="#f4f4f4"/><rect x="13.2" y="15" width="4.300" height="3.500" fill="#f4f4f4"/></svg>
<svg style="left:13px;top:650px;" width="30" height="30" viewBox="0 0 30 30"><path d="M10.500 22.500h7.600l-3.800 5.600z" fill="#7a7a7a"/></svg>
<svg style="left:13px;top:690px;" width="34" height="28" viewBox="0 0 34 28"><path d="M2 11L14 3.500L22 9.500L9 18.500Z" fill="#f2f2f0"/><path d="M2 11L9 18.500V22L2 14Z" fill="#e06a28"/><path d="M9 18.500L22 9.500V12.500L9 22Z" fill="#bfc4c8"/><path d="M9.500 6L17.500 3L19.500 7.500L22 6.500" fill="none" stroke="#aab4bc" stroke-width="1.600"/><path d="M5 11L13 6M7 13L15 8M9 15L17 10" stroke="#b8c0c6" stroke-width=".7"/><path d="M21 18.5v7.600l5.200-3.800z" fill="#7a7a7a"/></svg>
<svg style="left:13px;top:719.5px;" width="36" height="30" viewBox="0 0 36 30"><ellipse cx="13" cy="12" rx="11.500" ry="9" fill="#b4b4ac" stroke="#5a5a54" stroke-width=".8"/><ellipse cx="13" cy="13.500" rx="11.500" ry="9" fill="none" stroke="#8a8a82" stroke-width="1"/><g fill="#55554e"><ellipse cx="9" cy="8" rx="2.700" ry="2"/><ellipse cx="17" cy="8" rx="2.700" ry="2"/><ellipse cx="7.500" cy="14" rx="2.700" ry="2"/><ellipse cx="18.500" cy="14" rx="2.700" ry="2"/><ellipse cx="13" cy="17" rx="2.700" ry="2"/></g><path d="M8 20.500Q16 24 25 21.500L26.500 23.500" fill="none" stroke="#8a8a82" stroke-width="1.800"/><path d="M26 20.5v7.600l5.200-3.800z" fill="#7a7a7a"/></svg>
<svg style="left:21.5px;top:144.5px;" width="28" height="26" viewBox="0 0 28 26"><g><circle cx="7.500" cy="10" r="5.900" fill="#2c3336" stroke="#6f7d83" stroke-width="1.100"/><circle cx="7.500" cy="10" r="3.300" fill="#454f54"/><circle cx="8" cy="10.300" r="1.500" fill="#0c0c0c"/><circle cx="7.300" cy="9.600" r=".6" fill="#e8eef0"/>
<circle cx="15.500" cy="6.300" r="5.300" fill="#2c3336" stroke="#6f7d83" stroke-width="1.100"/><circle cx="15.500" cy="6.300" r="2.900" fill="#454f54"/><circle cx="16" cy="6.600" r="1.300" fill="#0c0c0c"/>
<path d="M11 11L17.500 9.500L19 14L12.500 16Z" fill="#7e8c92" stroke="#1e2426" stroke-width=".7"/>
<path d="M12 16L19 14L20.500 21.500L14 24Z" fill="#56646a" stroke="#1e2426" stroke-width=".8"/><path d="M14.500 17.500L18 16.500L19 20.500L15.500 22Z" fill="#8d9ca2"/>
<path d="M19.500 11.500L25.500 10L26.500 15.500L21 16.500Z" fill="#1a1f21" stroke="#3a4448" stroke-width=".7"/>
<path d="M8 16.500L9 19.500L11.500 18.500L13 21.500" fill="none" stroke="#2c3336" stroke-width="1.800"/></g></svg>
<svg style="left:41px;top:167px;" width="9" height="6" viewBox="0 0 9 6"><path d="M0 0h8l-4 4.800z" fill="#8a8a8a"/></svg>
<svg style="left:600px;top:146px;" width="28" height="26" viewBox="0 0 28 26"><ellipse cx="12" cy="14.500" rx="9.500" ry="4.200" fill="none" stroke="#3a68c0" stroke-width="1.800"/><path d="M10 2.500V16L13 13L15.500 18.500L17.500 17.500L15 12.500H19Z" fill="#f2f2f2" stroke="#222" stroke-width=".7"/><path d="M17.500 21h7l-3.500 4z" fill="#7b7b7b"/></svg>
<svg style="left:641px;top:146px;" width="28" height="26" viewBox="0 0 28 26"><path d="M1 6Q10 8 14 13T24 19" fill="none" stroke="#3a68c0" stroke-width="2"/><path d="M1 6l4.500-1.500L4.500 9z" fill="#3a68c0"/><path d="M8.500 3V16L11.500 13L14 18.500L16 17.500L13.500 12.500H17.500Z" fill="#f2f2f2" stroke="#222" stroke-width=".7"/><path d="M18.500 21h7l-3.500 4z" fill="#7b7b7b"/></svg>
<svg style="left:681px;top:144px;" width="30" height="28" viewBox="0 0 30 28"><path d="M4 8.500L17 6.500V15L4 17Z" fill="#4f5a60"/><ellipse cx="4.500" cy="12.700" rx="1.800" ry="4.200" fill="#7d898f"/><path d="M5 8.300L17 6.500V9L5 11Z" fill="#707c82" opacity=".7"/><path d="M11.500 6.800Q13.500 11 12.500 15.500" fill="none" stroke="#c83020" stroke-width="1"/><path d="M6 22.500L20 18" fill="none" stroke="#5a8ee0" stroke-width="3.200"/><path d="M24 16.500L17 15.500L19.500 21.500Z" fill="#3a70d0"/><path d="M2 24L9.500 25L7 19Z" fill="#3a70d0"/><path d="M15.500 1.500V14L18.500 11.500L21 16.500L23 15.500L20.500 10.800H24.500Z" fill="#f2f2f2" stroke="#222" stroke-width=".7"/><path d="M22 23.500h7l-3.500 4z" fill="#7b7b7b"/></svg>
<svg style="left:1226px;top:146px;" width="26" height="26" viewBox="0 0 26 26"><circle cx="5.5" cy="5" r="3.600" fill="#2f62c8"/><circle cx="4.5" cy="4" r="1.400" fill="#8ab0f0"/><path d="M1.5 12.5q0-3.500 4-3.500t4 3.500z" fill="#e8e8e8"/><circle cx="17" cy="8.5" r="3.600" fill="#2f62c8"/><circle cx="16" cy="7.5" r="1.400" fill="#8ab0f0"/><path d="M13 16.0q0-3.500 4-3.500t4 3.500z" fill="#e8e8e8"/><circle cx="6" cy="17" r="3.600" fill="#2f62c8"/><circle cx="5" cy="16" r="1.400" fill="#8ab0f0"/><path d="M2 24.5q0-3.500 4-3.500t4 3.500z" fill="#e8e8e8"/><path d="M15.500 20.500h7l-3.500 4z" fill="#7b7b7b"/></svg>
<svg style="left:1255.5px;top:145px;" width="25" height="25" viewBox="0 0 25 25"><circle cx="12.500" cy="12" r="10.600" fill="#1f1f1f" stroke="#e2e2e2" stroke-width="1.500"/><text x="12.500" y="17.500" font-size="15.500" font-weight="bold" font-family="Liberation Sans, sans-serif" text-anchor="middle" fill="#ececec">?</text></svg>
<div style="left:1252px;top:177px;width:32px;height:576px;background:#2d2d2d;"></div>
<div style="left:1253px;top:177.3px;width:31px;height:12px;background:linear-gradient(#4c4c4c,#353535);border-bottom:1px solid #111;border-left:1px solid #5a5a5a;border-top:1px solid #5a5a5a;"></div>
<svg style="left:1274.5px;top:180px;" width="8" height="8" viewBox="0 0 8 8"><path d="M0 0V7.400L6.500 3.700Z" fill="#000"/></svg>
<div style="left:1253.5px;top:214px;width:28.5px;height:28.5px;background:linear-gradient(#93a2a8,#b1bcbf);border:1px solid #c2cbce;border-right-color:#7d8b90;"></div>
<svg style="left:1253.5px;top:214px;" width="29" height="29" viewBox="0 0 29 29"><path d="M3.500 17L14 11.500L25.500 16L14.500 22.500Z" fill="#2d3a3a" stroke="#f0f0f0" stroke-width="1.200"/><path d="M8.700 14.300L20 19.300M9 19.800L19.700 13.700" stroke="#f0f0f0" stroke-width="1.100"/><path d="M23 21v7.600l5.200-3.800z" fill="#222"/></svg>
<svg style="left:1253.5px;top:246px;" width="30" height="28" viewBox="0 0 30 28"><path d="M3.500 4L15.500 2.500L20 16L6 19.500Z" fill="#2f4a2a" stroke="#8cc860" stroke-width="1.400"/><path d="M9 9.500A4.500 4.500 0 1 1 12 15.500" fill="none" stroke="#dcdcdc" stroke-width="1.500"/><path d="M8 4.500V10H13" fill="none" stroke="#5ab040" stroke-width="1.400"/><path d="M23.5 17.5v7.600l5.200-3.800z" fill="#7a7a7a"/></svg>
<svg style="left:1256px;top:276px;" width="24" height="26" viewBox="0 0 24 26"><path d="M7 11V7.500A5 5 0 0 1 17 7.500V9" fill="none" stroke="#e6e6e2" stroke-width="2.200"/><rect x="4.500" y="11" width="15" height="12" rx="1" fill="#e9e9e4"/><path d="M4.500 14h15M4.500 17h15M4.500 20h15" stroke="#b8b8b0" stroke-width=".9"/></svg>
<svg style="left:1256px;top:309.5px;" width="24" height="26" viewBox="0 0 24 26"><path d="M12 1.5a6.300 6.300 0 0 1 6.300 6.300q0 3-2.300 5.200-1 1.200-1.200 3.500h-5.600q-.2-2.300-1.200-3.500-2.300-2.200-2.300-5.200a6.300 6.300 0 0 1 6.300-6.300z" fill="#23282a" stroke="#e4e4e4" stroke-width="1.100"/><path d="M9.5 17.8h5M9.5 19.7h5M10.3 21.5h3.400" stroke="#e4e4e4" stroke-width="1.100"/><path d="M9.300 5.500l5.400 5.400M14.700 5.500l-5.400 5.400" stroke="#f4f4f4" stroke-width="1.800"/></svg>
<svg style="left:1254px;top:339px;" width="30" height="28" viewBox="0 0 30 28"><circle cx="13" cy="13" r="10.500" fill="url(#gsph)"/><circle cx="14.500" cy="13.500" r="6.800" fill="#f0f0ee" stroke="#7a7a76" stroke-width=".8"/><path d="M12 9v9M14.500 8.500v10M17 9v9" stroke="#a8a8a2" stroke-width="1.100"/><path d="M23.5 18.5v7.600l5.200-3.800z" fill="#7a7a7a"/></svg>
<div style="left:1253.5px;top:368px;width:28.5px;height:28.5px;background:linear-gradient(#93a2a8,#b1bcbf);border:1px solid #c2cbce;border-right-color:#7d8b90;"></div>
<svg style="left:1253.5px;top:368px;" width="29" height="29" viewBox="0 0 29 29"><path d="M14 3a6.300 6.300 0 0 1 6.300 6.300q0 3-2.300 5.200-1 1.200-1.200 3.500h-5.600q-.2-2.300-1.200-3.500-2.300-2.200-2.300-5.200a6.300 6.300 0 0 1 6.300-6.300z" fill="#a6a69e" stroke="#55554e" stroke-width="1.100"/><path d="M11.5 19.3h5M11.5 21.2h5M12.3 23h3.400" stroke="#55554e" stroke-width="1.100"/><path d="M23 21v7.600l5.200-3.800z" fill="#222"/></svg>
<svg style="left:1256px;top:400.5px;" width="28" height="28" viewBox="0 0 28 28"><path d="M11.5 2a6.300 6.300 0 0 1 6.300 6.300q0 3-2.300 5.200-1 1.200-1.200 3.500h-5.600q-.2-2.300-1.200-3.500-2.300-2.200-2.300-5.200a6.300 6.300 0 0 1 6.300-6.300z" fill="#d8d88a" stroke="#8a8a50" stroke-width="1.100"/><path d="M9.0 18.3h5M9.0 20.2h5M9.8 22h3.400" stroke="#8a8a50" stroke-width="1.100"/><path d="M11.500 5v7M8 8.500h7" stroke="#333" stroke-width="2"/><path d="M21.5 18.5v7.600l5.200-3.800z" fill="#7a7a7a"/></svg>
<svg style="left:1256px;top:429px;" width="28" height="28" viewBox="0 0 28 28"><path d="M11.5 1a6.300 6.300 0 0 1 6.300 6.300q0 3-2.300 5.200-1 1.200-1.200 3.500h-5.600q-.2-2.300-1.200-3.500-2.300-2.200-2.300-5.200a6.300 6.300 0 0 1 6.300-6.300z" fill="#e6e6b0" stroke="#8a8a60" stroke-width="1.100"/><path d="M9.0 17.3h5M9.0 19.2h5M9.8 21h3.400" stroke="#8a8a60" stroke-width="1.100"/><path d="M11.500 4v7M8 7.500h7" stroke="#333" stroke-width="2"/><ellipse cx="11.500" cy="21" rx="9" ry="2.600" fill="none" stroke="#e4e4e4" stroke-width="1.200"/><path d="M22 18v7.600l5.200-3.800z" fill="#7a7a7a"/></svg>
<div style="left:1253.5px;top:463px;width:28.5px;height:28.5px;background:linear-gradient(#93a2a8,#b1bcbf);border:1px solid #c2cbce;border-right-color:#7d8b90;"></div>
<svg style="left:1253.5px;top:463px;" width="29" height="29" viewBox="0 0 29 29"><path d="M4.500 8.500L14 4L24 8L14.500 12.500Z" fill="#f2f2f2"/><path d="M4.500 8.500L14.500 12.500V25L5.500 20Z" fill="#e0e0e0"/><path d="M14.500 12.500L24 8L23 20L14.500 25Z" fill="#9a9a9a"/><path d="M9.500 6.300L14 4L19 6L14.500 8.300ZM9.500 10.500L14.500 12.500V18.700L10 16.300ZM14.500 18.700L19 16.500L18.700 22.300L14.500 25ZM19.200 10.200L24 8L23.500 14.200L19 16.500ZM4.500 8.500L9.500 10.500L9.700 6.300ZM5.200 14.500L10 16.300L10 22.500L5.500 20Z" fill="#141414"/><path d="M23 21v7.600l5.200-3.800z" fill="#222"/></svg>
<svg style="left:1257px;top:496px;" width="28" height="24" viewBox="0 0 28 24"><path d="M1.500 3.500Q5 -.5 10 3L19 9.500Q21 10.500 22.500 10" fill="none" stroke="#f0f0f0" stroke-width="1.700"/><path d="M2.300 4.300Q1.800 9.500 5.800 10Q9 10 8.500 5.500Q5 2.800 2.300 4.300Z" fill="#141414" stroke="#f4f4f4" stroke-width="1.600"/><path d="M9.500 7Q9 13.500 13.800 14Q17.500 14 18 10.500Q13 6.200 9.500 7Z" fill="#141414" stroke="#f4f4f4" stroke-width="1.600"/><path d="M17.500 17.500h7l-3.500 4.200z" fill="#7b7b7b"/></svg>
<svg style="left:1255px;top:524px;" width="30" height="30" viewBox="0 0 30 30"><g transform="translate(4 0)"><path d="M1.500 3.500Q5 -.5 10 3L19 9.500Q21 10.500 22.500 10" fill="none" stroke="#f0f0f0" stroke-width="1.700"/><path d="M2.300 4.300Q1.800 9.500 5.800 10Q9 10 8.500 5.500Q5 2.800 2.300 4.300Z" fill="#141414" stroke="#f4f4f4" stroke-width="1.600"/><path d="M9.500 7Q9 13.500 13.800 14Q17.500 14 18 10.500Q13 6.200 9.500 7Z" fill="#141414" stroke="#f4f4f4" stroke-width="1.600"/></g><rect x="1.500" y="13.500" width="11.500" height="9.500" rx="1.500" fill="#8a8a8a" stroke="#c8c8c8" stroke-width=".9"/><path d="M5 15.500V21L10 18.200Z" fill="#f2f2f2"/><path d="M22.5 19v7.600l5.200-3.800z" fill="#7a7a7a"/></svg>
<div style="left:1254px;top:555.5px;width:29px;height:1px;background:#3d3d3d;"></div>
<svg style="left:1262px;top:568px;" width="12" height="12" viewBox="0 0 12 12"><circle cx="5.500" cy="5.800" r="3.700" fill="#f0f0ec"/></svg>
<svg style="left:1257px;top:594px;" width="24" height="22" viewBox="0 0 24 22"><path d="M8 13.500L20 3" stroke="#e8e8e4" stroke-width="2"/><circle cx="7" cy="14" r="4.200" fill="#efefeb"/><circle cx="7.800" cy="15" r="1.600" fill="#555"/></svg>
<svg style="left:1257px;top:625px;" width="24" height="24" viewBox="0 0 24 24"><path d="M3 21.500L12.500 9.500L14.500 11.500Z" fill="#d8d8d4"/><circle cx="15" cy="7" r="3.600" fill="#f0f0ec"/></svg>
<svg style="left:1257px;top:656px;" width="28" height="24" viewBox="0 0 28 24"><circle cx="5.500" cy="17" r="3.700" fill="#e9e9e5"/><text x="8.500" y="13.500" font-size="12.500" font-weight="bold" font-family="Liberation Sans, sans-serif" fill="#f0f0f0" letter-spacing="-.6">12</text></svg>
<svg style="left:1256px;top:684px;" width="26" height="28" viewBox="0 0 26 28"><path d="M2.500 19L11.500 10.500L22.500 13.500L20 24.500Z" fill="#dededa"/><path d="M12.500 17.500L16.500 2.500" stroke="#f0f0ec" stroke-width="2"/></svg>
<svg style="left:1257px;top:716px;" width="28" height="20" viewBox="0 0 28 20"><path d="M1 15.500L5.500 9.500L6 15.500Z" fill="#e0e0e0"/><text x="6" y="15.500" font-size="12.500" font-weight="bold" font-family="Liberation Sans, sans-serif" fill="#f0f0f0" letter-spacing="-.6">12</text></svg>
<svg style="left:1263.5px;top:738.5px;" width="10" height="8" viewBox="0 0 10 8"><path d="M0 0h9l-4.500 7z" fill="#7a7a7a"/></svg>
<svg width="0" height="0" style="left:0;top:0"><defs>
<radialGradient id="sphg" cx=".38" cy=".3" r=".8"><stop offset="0" stop-color="#eef1f3"/><stop offset=".42" stop-color="#a2adb5"/><stop offset="1" stop-color="#424d54"/></radialGradient>
<linearGradient id="tubg" x1="0" y1="0" x2="1" y2="0"><stop offset="0" stop-color="#c9d6dc"/><stop offset=".35" stop-color="#b4c0c7"/><stop offset="1" stop-color="#6d7a83"/></linearGradient>
<linearGradient id="bxl" x1="0" y1="0" x2="1" y2="1"><stop offset="0" stop-color="#bfccd4"/><stop offset="1" stop-color="#98aab5"/></linearGradient>
<linearGradient id="bxr" x1="0" y1="0" x2="1" y2="1"><stop offset="0" stop-color="#a3b2bc"/><stop offset="1" stop-color="#6c7d89"/></linearGradient>
<linearGradient id="peng" x1="0" y1="0" x2="1" y2="1"><stop offset="0" stop-color="#86b0e4"/><stop offset=".5" stop-color="#4a80c4"/><stop offset="1" stop-color="#2c5896"/></linearGradient>
<linearGradient id="cang" x1="0" y1="0" x2="1" y2="0"><stop offset="0" stop-color="#8a8a8a"/><stop offset=".4" stop-color="#f4f4f4"/><stop offset="1" stop-color="#9a9a9a"/></linearGradient>
<linearGradient id="tg" x1="0" y1="0" x2="1" y2="0"><stop offset="0" stop-color="#e4edf2"/><stop offset=".5" stop-color="#c2d0d8"/><stop offset="1" stop-color="#8497a3"/></linearGradient>
<radialGradient id="shad" cx=".5" cy=".5" r=".5"><stop offset="0" stop-color="#000" stop-opacity=".55"/><stop offset="1" stop-color="#000" stop-opacity="0"/></radialGradient>
<radialGradient id="glowy" cx=".5" cy=".5" r=".5"><stop offset="0" stop-color="#fff8b0" stop-opacity=".95"/><stop offset=".5" stop-color="#f0d850" stop-opacity=".5"/><stop offset="1" stop-color="#e0c030" stop-opacity="0"/></radialGradient>
<radialGradient id="glowp" cx=".5" cy=".5" r=".5"><stop offset="0" stop-color="#ffe070" stop-opacity=".9"/><stop offset=".6" stop-color="#c070c0" stop-opacity=".35"/><stop offset="1" stop-color="#a050a0" stop-opacity="0"/></radialGradient>
<radialGradient id="glowf" cx=".5" cy=".5" r=".5"><stop offset="0" stop-color="#ffffff" stop-opacity=".55"/><stop offset="1" stop-color="#cccccc" stop-opacity="0"/></radialGradient>
<radialGradient id="sung" cx=".4" cy=".35" r=".7"><stop offset="0" stop-color="#fff0a0"/><stop offset=".5" stop-color="#f8b020"/><stop offset="1" stop-color="#e07808"/></radialGradient>
<radialGradient id="gig" cx=".42" cy=".35" r=".75"><stop offset="0" stop-color="#ffffff"/><stop offset=".6" stop-color="#dcdcdc"/><stop offset="1" stop-color="#8a8a8a"/></radialGradient>
<radialGradient id="ambg" cx=".4" cy=".35" r=".75"><stop offset="0" stop-color="#f4ffff"/><stop offset=".6" stop-color="#b8dce0"/><stop offset="1" stop-color="#7aa4aa"/></radialGradient>
<linearGradient id="icog" x1="0" y1="0" x2="1" y2="1"><stop offset="0" stop-color="#e8e8e8"/><stop offset="1" stop-color="#6a6a6a"/></linearGradient>
</defs></svg>
<svg style="left:44px;top:26px;" width="26" height="26" viewBox="0 0 26 26"><ellipse cx="15" cy="23.5" rx="11" ry="3" fill="url(#shad)"/><path d="M1.500 5.500L13 .5L25 5L13.500 10.500Z" fill="#d3dce2"/><path d="M1.500 5.500L13.500 10.500L12.500 25L3.500 19Z" fill="url(#bxl)"/><path d="M13.500 10.500L25 5L23.500 19.500L12.500 25Z" fill="url(#bxr)"/></svg>
<svg style="left:95px;top:26px;" width="26" height="26" viewBox="0 0 26 26"><ellipse cx="14" cy="23.5" rx="11" ry="3" fill="url(#shad)"/><circle cx="13.500" cy="12.500" r="11.800" fill="url(#sphg)"/></svg>
<svg style="left:146px;top:26px;" width="26" height="26" viewBox="0 0 26 26"><ellipse cx="16" cy="23.5" rx="10" ry="3" fill="url(#shad)"/><path d="M5.500 4V21.500A8 3 0 0 0 21.500 21.500V4Z" fill="url(#tubg)" stroke="#7fb4bf" stroke-width=".7"/><ellipse cx="13.500" cy="4" rx="8" ry="3" fill="#8d9aa3" stroke="#cfe4ea" stroke-width=".9"/></svg>
<svg style="left:197px;top:26px;" width="26" height="26" viewBox="0 0 26 26"><ellipse cx="14" cy="21.5" rx="12" ry="3.5" fill="url(#shad)"/><ellipse cx="13" cy="13.500" rx="12.300" ry="8.300" fill="#6f7e88"/><ellipse cx="13" cy="12.300" rx="11.800" ry="7" fill="#94a3ad"/><ellipse cx="13" cy="11" rx="9.500" ry="4.800" fill="#aebbc3"/><ellipse cx="13" cy="12" rx="5.800" ry="2.500" fill="#262c30"/><ellipse cx="13" cy="13" rx="5.800" ry="2" fill="#56636c"/><ellipse cx="13" cy="11.700" rx="5" ry="1.700" fill="#262c30"/><path d="M1.200 15Q13 25 24.800 15M2.500 9.500Q13 2 23.500 9.500M13 5.200V9.500M13 14.500V21.700M5 7.500L8.500 10.500M21 7.500L17.500 10.500M4 18.500L8 14M22 18.500L18 14" fill="none" stroke="#5f6e78" stroke-width=".45"/></svg>
<svg style="left:248px;top:26px;" width="26" height="26" viewBox="0 0 26 26"><path d="M5 13.500H21L25 20.500H1Z" fill="#cdd5da"/><path d="M1 20.500H25V21.300H1Z" fill="#8996a0"/><path d="M9 13.500L7 20.500M13 13.500V20.500M17 13.500L19 20.500M3.500 16H22.500M2.200 18.300H23.800" stroke="#aab6be" stroke-width=".5"/></svg>
<svg style="left:299px;top:26px;" width="26" height="26" viewBox="0 0 26 26"><path d="M3 18.500L22 7" stroke="#3a78d0" stroke-width="1.300"/><circle cx="3" cy="18.500" r="1.600" fill="#4a88e0"/><circle cx="22" cy="7" r="1.600" fill="#4a88e0"/><path d="M5 7.500L23 19" stroke="#e01818" stroke-width="1.600"/><circle cx="5" cy="7.500" r="1.900" fill="#e81c1c"/><circle cx="23" cy="19" r="1.900" fill="#e81c1c"/><path d="M13.500 2V24" stroke="#c8cc28" stroke-width="2"/><circle cx="13.500" cy="2.300" r="1.600" fill="#d4d830"/><circle cx="13.500" cy="23.700" r="1.600" fill="#d4d830"/><circle cx="13.500" cy="13" r="1.300" fill="#fff0c0"/></svg>
<svg style="left:350px;top:26px;" width="26" height="26" viewBox="0 0 26 26"><path d="M5 0V23M1 23.500H27" stroke="#5a5a5a" stroke-width="1.300"/><path d="M4.500 24L20.500 4.500" stroke="#f4f4f4" stroke-width="3.600"/><path d="M4.500 24L20.500 4.500" stroke="#080808" stroke-width="2"/><path d="M2 20L17 2.500" stroke="#e02020" stroke-width="1.200" stroke-dasharray="1.200 1"/><path d="M1 18.500L4 22.500M16 1L19.500 3.500L16.500 5" stroke="#e02020" stroke-width="1.200" fill="none"/><path d="M15.500 13.500Q20.500 17 20.500 23" fill="none" stroke="#e02020" stroke-width="1.300" stroke-dasharray="1.200 1.200"/></svg>
<svg style="left:401px;top:26px;" width="26" height="26" viewBox="0 0 26 26"><circle cx="13.500" cy="13" r="12" fill="none" stroke="#a9bfe2" stroke-width="1.100"/></svg>
<svg style="left:452px;top:26px;" width="26" height="26" viewBox="0 0 26 26"><path d="M3 11L11 1.500L18 24L26 12" fill="none" stroke="#e8961e" stroke-width="1.300" stroke-dasharray="1.300 1.200"/><path d="M3 11Q8 5 12.500 11T19.500 17Q23 17 26 12" fill="none" stroke="#f4f4f4" stroke-width="1.150"/><g fill="#b8b8b8"><circle cx="3" cy="11" r="1.100"/><circle cx="11" cy="1.500" r="1.100"/><circle cx="18" cy="24" r="1.100"/><circle cx="26" cy="12" r="1.100"/></g></svg>
<svg style="left:512px;top:26px;" width="26" height="26" viewBox="0 0 26 26"><path d="M8 5Q14 11 8 15T7 21.500Q10 25.500 15 24.500" fill="none" stroke="#050505" stroke-width="1.800" stroke-linecap="round"/><path d="M7 21.500Q10 25.500 15 24.500" fill="none" stroke="#050505" stroke-width="2.800" stroke-linecap="round"/><g transform="translate(22 13.5) rotate(24)"><path d="M-1.600 -13Q0 -14.800 1.600 -13V6.500L0 11.500L-1.600 6.500Z" fill="url(#peng)" stroke="#244f8c" stroke-width=".4"/><path d="M-1.600 6.500L0 11.500L1.600 6.500Z" fill="#cfd4d8"/><path d="M1.900 -11.500V-3.500" stroke="#8ab4e4" stroke-width=".8"/></g></svg>
<svg style="left:571px;top:26px;" width="26" height="26" viewBox="0 0 26 26"><path d="M5 3Q14 3 17 9Q12 14 5 20.500Q9 25 15 26" fill="none" stroke="#8a8a8a" stroke-width="1.300"/><g fill="#f2d020" stroke="#a88a10" stroke-width=".4"><circle cx="5" cy="3" r="2"/><circle cx="17" cy="9" r="2"/><circle cx="5" cy="20.500" r="2"/></g><g transform="translate(23 15) rotate(20)"><path d="M-1.600 -13Q0 -14.800 1.600 -13V6.500L0 11.500L-1.600 6.500Z" fill="url(#peng)" stroke="#244f8c" stroke-width=".4"/><path d="M-1.600 6.500L0 11.500L1.600 6.500Z" fill="#cfd4d8"/><path d="M1.900 -11.500V-3.500" stroke="#8ab4e4" stroke-width=".8"/></g></svg>
<svg style="left:631px;top:26px;" width="26" height="26" viewBox="0 0 26 26"><ellipse cx="8" cy="24" rx="8" ry="2" fill="url(#shad)"/><path d="M16.500 3.500L24.500 2L24 11Z" fill="#e81818" opacity=".8"/><path d="M17 4L28 1.500L27 12.500Z" fill="#e83030" opacity=".3"/><g transform="rotate(27 12 14)"><rect x="6.500" y="5.500" width="11" height="21" rx="2.200" fill="url(#cang)"/><path d="M8 5.500Q12 1.500 16 5.500Z" fill="#d4d4d4"/><rect x="10.500" y="0.500" width="3.600" height="3" fill="#2a2a2a"/><path d="M17.500 11.500A5.200 5.500 0 1 0 17.500 21" fill="none" stroke="#d82828" stroke-width="1.800"/></g></svg>
<svg style="left:690px;top:26px;" width="26" height="26" viewBox="0 0 26 26"><ellipse cx="14" cy="24" rx="8" ry="1.800" fill="url(#shad)"/><path d="M3 2L24 .5L25 7L22 6.500Q21 4.500 17 4.500V21Q17 23 19.500 23.500V25H9V23.500Q11.500 23 11.500 21V5Q7 5 6 8.500L3.500 9Z" fill="url(#tg)" stroke="#6d7f8a" stroke-width=".5"/><path d="M17 4.500V21Q17 23 19.500 23.500V25H17.500Q15.500 24 15.500 21V5Z" fill="#8fa2ad" opacity=".8"/></svg>
<svg style="left:758px;top:26px;" width="26" height="26" viewBox="0 0 26 26"><ellipse cx="15" cy="23" rx="10" ry="2.500" fill="url(#shad)"/><path d="M14 0.500L24.500 7L25 17.500L15 24.500L3.500 18L2.500 8Z" fill="url(#icog)" stroke="#3a3a3a" stroke-width=".7"/><path d="M14 0.500L10 11L2.500 8M10 11L19.500 13.500L14 0.500M19.500 13.500L24.500 7M19.500 13.500L25 17.500M19.500 13.500L15 24.500L10 11L3.500 18" fill="none" stroke="#2e2e2e" stroke-width=".7"/><path d="M10 11L19.500 13.500L14 0.500Z" fill="#e2e2e2"/><path d="M10 11L19.500 13.500L15 24.500Z" fill="#f6f6f6"/><path d="M10 11L15 24.500L3.500 18Z" fill="#8a8a8a"/><path d="M19.500 13.500L25 17.500L15 24.500Z" fill="#6a6a6a"/></svg>
<svg style="left:825px;top:26px;" width="26" height="26" viewBox="0 0 26 26"><g fill="none" stroke="#2c5eae" stroke-width="1.250" stroke-linecap="round"><path d="M14.500 26Q15 18 14 11L13.500 2"/><path d="M14.300 15L6 8.500L2.500 9.500M6 8.500L5 3.500"/><path d="M14 11L9.500 5.500V1.500M9.500 5.500L6.500 3"/><path d="M14.500 18L22 12L26.500 12.500M22 12L23.500 6L21.500 2.500M23.500 6L26.500 4"/><path d="M13.800 7L17.500 3L17 0.500M17.500 3L20 2"/><path d="M14.500 21.500L8 19L4.500 15M8 19L3 20.500"/><path d="M14.800 22.500L20.500 20L25.500 21.500M20.500 20L24 16.500"/></g></svg>
<svg style="left:926px;top:26px;" width="26" height="26" viewBox="0 0 26 26"><ellipse cx="14" cy="24" rx="10" ry="2" fill="url(#shad)"/><circle cx="8" cy="12.500" r="6.400" fill="#2c3336" stroke="#5d6a70" stroke-width="1"/><circle cx="8" cy="12.500" r="3.600" fill="#454f54"/><circle cx="8.500" cy="12.800" r="1.700" fill="#0c0c0c"/><circle cx="7.600" cy="12" r=".7" fill="#dfe6e8"/><circle cx="17" cy="7.500" r="5.800" fill="#2c3336" stroke="#5d6a70" stroke-width="1"/><circle cx="17" cy="7.500" r="3.200" fill="#454f54"/><circle cx="17.500" cy="7.800" r="1.500" fill="#0c0c0c"/><circle cx="16.700" cy="7.100" r=".6" fill="#dfe6e8"/><path d="M10.500 17.500L20 14L23 21.500L13.500 25Z" fill="#3e4a4f" stroke="#15191b" stroke-width=".9"/><path d="M14.500 19L18.500 17.500L19.800 21L15.800 22.500Z" fill="#7b8a90"/><path d="M21.500 15L27 13L28.300 18.500L23.300 20Z" fill="#1c2224" stroke="#3a4448" stroke-width=".7"/></svg>
<svg style="left:985px;top:27.5px;" width="26" height="26" viewBox="0 0 26 26"><circle cx="13.500" cy="11.500" r="9" fill="url(#glowy)"/><g transform="translate(13.5 11.5) rotate(0)"><path d="M0 -7V-11.5" stroke="#e8d040" stroke-width="1.300"/><path d="M-2.200 -10.3L0 -12.5L2.200 -10.3Z" fill="#f0dc50"/></g><g transform="translate(13.5 11.5) rotate(45)"><path d="M0 -7V-11.5" stroke="#e8d040" stroke-width="1.300"/><path d="M-2.200 -10.3L0 -12.5L2.200 -10.3Z" fill="#f0dc50"/></g><g transform="translate(13.5 11.5) rotate(90)"><path d="M0 -7V-11.5" stroke="#e8d040" stroke-width="1.300"/><path d="M-2.200 -10.3L0 -12.5L2.200 -10.3Z" fill="#f0dc50"/></g><g transform="translate(13.5 11.5) rotate(135)"><path d="M0 -7V-11.5" stroke="#e8d040" stroke-width="1.300"/><path d="M-2.200 -10.3L0 -12.5L2.200 -10.3Z" fill="#f0dc50"/></g><g transform="translate(13.5 11.5) rotate(225)"><path d="M0 -7V-11.5" stroke="#e8d040" stroke-width="1.300"/><path d="M-2.200 -10.3L0 -12.5L2.200 -10.3Z" fill="#f0dc50"/></g><g transform="translate(13.5 11.5) rotate(270)"><path d="M0 -7V-11.5" stroke="#e8d040" stroke-width="1.300"/><path d="M-2.200 -10.3L0 -12.5L2.200 -10.3Z" fill="#f0dc50"/></g><g transform="translate(13.5 11.5) rotate(315)"><path d="M0 -7V-11.5" stroke="#e8d040" stroke-width="1.300"/><path d="M-2.200 -10.3L0 -12.5L2.200 -10.3Z" fill="#f0dc50"/></g><path d="M13.500 4.500a6 6 0 0 1 6 6q0 3-2.200 5-1 1.200-1.200 3.200h-5.200q-.2-2-1.200-3.200-2.200-2-2.200-5a6 6 0 0 1 6-6z" fill="#fff6b8" stroke="#d8c040" stroke-width=".7"/><rect x="11" y="19" width="5" height="4.500" rx="1" fill="#8c8c86"/><path d="M11 20.500h5M11 22h5" stroke="#c8c8c0" stroke-width=".6"/></svg>
<svg style="left:1048px;top:26px;" width="26" height="26" viewBox="0 0 26 26"><path d="M3 6.500Q5 1 11 1.500L9 6Z" fill="#f08a20"/><path d="M3 6.500L9 4L20 5.500L25.500 12L23 19L14 23.500L7 20L3.500 12Z" fill="#e2e2e0" stroke="#8a8a88" stroke-width=".6"/><path d="M14 23.500L7 20L8.500 14L15.500 17.500ZM25.500 12L23 19L19.500 14L21 8Z" fill="#a8a8a6"/><path d="M9 4L20 5.500L21 8L12.500 6Z" fill="#c4c4c2"/><circle cx="11.500" cy="11" r="5.500" fill="#faf6e0" stroke="#bdbdb8" stroke-width=".8"/><path d="M11.500 11L24.500 24" stroke="#e8c830" stroke-width="1.500"/><path d="M26 25.500L20.500 24L24.500 20Z" fill="#f0d040"/></svg>
<svg style="left:1109px;top:26px;" width="26" height="26" viewBox="0 0 26 26"><path d="M1.500 1.500H25.500L20.500 8H6.500Z" fill="#f0dc60"/><path d="M5 2.500H22L19.500 5.500H7.500Z" fill="#fffbd0"/><g stroke="#e4cc40" stroke-width="1.500" opacity=".9"><path d="M8.500 8L4 20M13.500 8V22M18.500 8L23 20"/></g><path d="M1.500 18.500L3.500 24L7 19.500ZM10.500 21L13.500 26L16.500 21ZM20 19.500L23.500 24L25.500 18.500Z" fill="#f0d840"/></svg>
<svg style="left:1182px;top:26px;" width="26" height="26" viewBox="0 0 26 26"><circle cx="12.500" cy="11" r="9.500" fill="url(#glowp)"/><path d="M11 .5H14L17.500 14.500L16 19H9L7.500 14.500Z" fill="#b040b8"/><path d="M11 .5H14L14.500 3H10.500Z" fill="#c8c8c8"/><path d="M11.500 5Q15 6 14 9Q16.500 11 14.500 13.500Q11 15 10.500 12Q9 9.500 11.500 8.500Q10.500 6.500 11.500 5Z" fill="#fcd838"/><path d="M9 19H16L17.500 25.500H7.500Z" fill="#9a9a9a"/><path d="M10 19H12L11.500 25.500H9.500Z" fill="#d8d8d8"/></svg>
<svg style="left:1261px;top:26px;" width="26" height="26" viewBox="0 0 26 26"><circle cx="13" cy="12" r="11" fill="url(#glowf)"/><ellipse cx="13" cy="22" rx="10.500" ry="3" fill="url(#glowy)"/><path d="M12 2.500Q13 6 16 8Q17.500 6.500 17 5Q21 9.500 19.500 14.500Q18 19.500 13 19.500Q7.500 19.500 6.500 14.500Q6 10.500 9 8Q9 10 10.500 10.500Q10 6 12 2.500Z" fill="#e83818"/><path d="M12.500 8.500Q13.500 11 15.500 12.500Q17.500 15 15.500 17.500Q13 19.500 10.500 17.500Q8.500 15 10.500 12.500Q11 13.500 11.800 13.500Q11.500 11 12.500 8.500Z" fill="#fc9a20"/><ellipse cx="13" cy="16.500" rx="2.300" ry="2.500" fill="#fff0a0"/></svg>
<svg style="left:1336px;top:26px;" width="26" height="26" viewBox="0 0 26 26"><g transform="translate(9.500 9) scale(.86)"><g fill="#f4c428"><path d="M-2.200 -6.800L0 -10.500L2.200 -6.800Z" transform="rotate(0)"/><path d="M-2.200 -6.800L0 -10.500L2.200 -6.800Z" transform="rotate(45)"/><path d="M-2.200 -6.800L0 -10.500L2.200 -6.800Z" transform="rotate(90)"/><path d="M-2.200 -6.800L0 -10.500L2.200 -6.800Z" transform="rotate(135)"/><path d="M-2.200 -6.800L0 -10.500L2.200 -6.800Z" transform="rotate(180)"/><path d="M-2.200 -6.800L0 -10.500L2.200 -6.800Z" transform="rotate(225)"/><path d="M-2.200 -6.800L0 -10.500L2.200 -6.800Z" transform="rotate(270)"/><path d="M-2.200 -6.800L0 -10.500L2.200 -6.800Z" transform="rotate(315)"/></g><circle r="7.300" fill="url(#sung)"/></g><g stroke="#e8c020" stroke-width="1.500"><path d="M11 17.500L18 24.500M15.500 13L23 20.500M19 9.500L25 15.500"/></g><path d="M20 26.500L14.500 25L18.500 21ZM25.500 22.500L20 21L24 17ZM27 17.500L21.500 16.500L25.500 12.500Z" fill="#f0cc28"/></svg>
<svg style="left:1415px;top:25.5px;" width="26" height="26" viewBox="0 0 26 26"><circle cx="13.500" cy="13.500" r="13" fill="#e2ca26" stroke="#a89010" stroke-width=".8"/><circle cx="13.500" cy="13.500" r="10.200" fill="none" stroke="#f8ea78" stroke-width="1.300"/><path d="M2.500 15.500Q13.500 5 24.500 15.500Q13.500 21.500 2.500 15.500Z" fill="#a6a6a6" stroke="#6a6a6a" stroke-width=".6"/><circle cx="13.500" cy="12" r="3.900" fill="url(#gsph)"/><path d="M2 18Q13.500 29 25 18Q13.500 23 2 18Z" fill="#f4e468"/></svg>
<svg style="left:1484px;top:26px;" width="26" height="26" viewBox="0 0 26 26"><ellipse cx="14" cy="19" rx="11.500" ry="5.500" fill="#c8b070"/><ellipse cx="14" cy="17" rx="11.500" ry="5.500" fill="#f0e4c0" stroke="#c8a850" stroke-width=".8"/><path d="M7.500 17V6.500Q13 0 18 3.500Q21 8 19 17" fill="#a8c8e8" fill-opacity=".45" stroke="#4a8ad0" stroke-width=".7"/><path d="M21 8.500L14 15L21.500 20" fill="none" stroke="#5a3a9a" stroke-width="1.700"/><path d="M21.500 13.500L18.500 15.500L22 17.500Z" fill="#7a5a20"/><circle cx="6" cy="5.500" r="2.700" fill="#f8a818"/><circle cx="5.500" cy="5" r="1" fill="#ffe890"/></svg>
<svg width="0" height="0" style="left:0;top:0"><defs><radialGradient id="gigr" cx=".0" cy=".55" r=".6"><stop offset="0" stop-color="#50d060" stop-opacity=".3"/><stop offset="1" stop-color="#50d060" stop-opacity="0"/></radialGradient><radialGradient id="girr" cx="1" cy=".55" r=".6"><stop offset="0" stop-color="#f06070" stop-opacity=".3"/><stop offset="1" stop-color="#f06070" stop-opacity="0"/></radialGradient></defs></svg>
<svg style="left:1537px;top:26px;" width="26" height="26" viewBox="0 0 26 26"><ellipse cx="14" cy="23.5" rx="10" ry="2.5" fill="url(#shad)"/><circle cx="13.500" cy="12.500" r="11.800" fill="url(#gig)"/><circle cx="13.500" cy="12.500" r="11.800" fill="url(#gigr)"/><circle cx="13.500" cy="12.500" r="11.800" fill="url(#girr)"/></svg>
<svg style="left:1600px;top:26px;" width="26" height="26" viewBox="0 0 26 26"><path d="M8 17Q16 13 24 19Q25.500 24 20 25.500Q14 25 8.500 20.500Z" fill="#7aa0d8" fill-opacity=".55"/><path d="M2.500 2.500Q6.500 .5 11 2.500L10.500 13.500Q10.500 16 13 17.500L18 20.500L15 25L7 20Q3.500 17.500 3.500 13.500Z" fill="#a8c4ec" fill-opacity=".8" stroke="#dce8f8" stroke-width=".7"/><ellipse cx="6.800" cy="2.800" rx="4.200" ry="1.600" fill="#6888b8" stroke="#e4eefa" stroke-width=".7"/></svg>
<svg style="left:1672px;top:26px;" width="26" height="26" viewBox="0 0 26 26"><path d="M1.500 1L8 2.500V17L1.500 15Z" fill="#6a5a2a" stroke="#b87838" stroke-width="1"/><path d="M3 3L8 4L26 18.500V26.500L12 23L3 14Z" fill="#c4c420" fill-opacity=".62"/><path d="M3 8L22 21.500M8 4L14 23M3 14L24 24" stroke="#58a8a0" stroke-width=".7" opacity=".7"/><path d="M8 10L26 22" stroke="#e8e860" stroke-width=".8" opacity=".7"/></svg>
<svg style="left:1747px;top:26px;" width="26" height="26" viewBox="0 0 26 26"><path d="M13.500 1.500a8.500 8.500 0 0 1 8.500 8.500q0 3.800-3 6.800-1.300 1.700-1.500 3.700h-8q-.2-2-1.500-3.700-3-3-3-6.800a8.500 8.500 0 0 1 8.500-8.500z" fill="url(#ambg)"/><rect x="10" y="20.500" width="7" height="5" rx="1.200" fill="#8a8a86"/><path d="M10 22h7M10 23.700h7" stroke="#d0d0c8" stroke-width=".7"/><path d="M11.500 20L12.500 15.500H14.500L15.500 20" fill="none" stroke="#6a8a90" stroke-width=".6"/></svg>
<svg style="left:1830px;top:26px;" width="26" height="26" viewBox="0 0 26 26"><path d="M2 8Q2 5.500 4.500 5.500H9L10.500 4H17.500L19 5.500H23.500Q26 5.500 26 8V18Q26 20 24 20H4Q2 20 2 18Z" fill="#c4c8cc" stroke="#4a4e52" stroke-width=".8"/><path d="M2 8Q2 5.500 4.500 5.500H5V20H4Q2 20 2 18ZM26 8Q26 5.500 23.500 5.500H23V20H24Q26 20 26 18Z" fill="#2a62b8"/><path d="M5 7H23V9.500H5Z" fill="#e8eaec"/><circle cx="8.500" cy="14.500" r="3.800" fill="#1c1c1c" stroke="#6a6a6a" stroke-width=".9"/><circle cx="19.500" cy="14.500" r="3.800" fill="#1c1c1c" stroke="#6a6a6a" stroke-width=".9"/><circle cx="8" cy="14" r="1.100" fill="#9a9a9a"/><circle cx="19" cy="14" r="1.100" fill="#9a9a9a"/><rect x="12.300" y="12.500" width="3.500" height="3.500" fill="#3a5a3a" stroke="#222" stroke-width=".5"/></svg>
</div>
</body></html>
